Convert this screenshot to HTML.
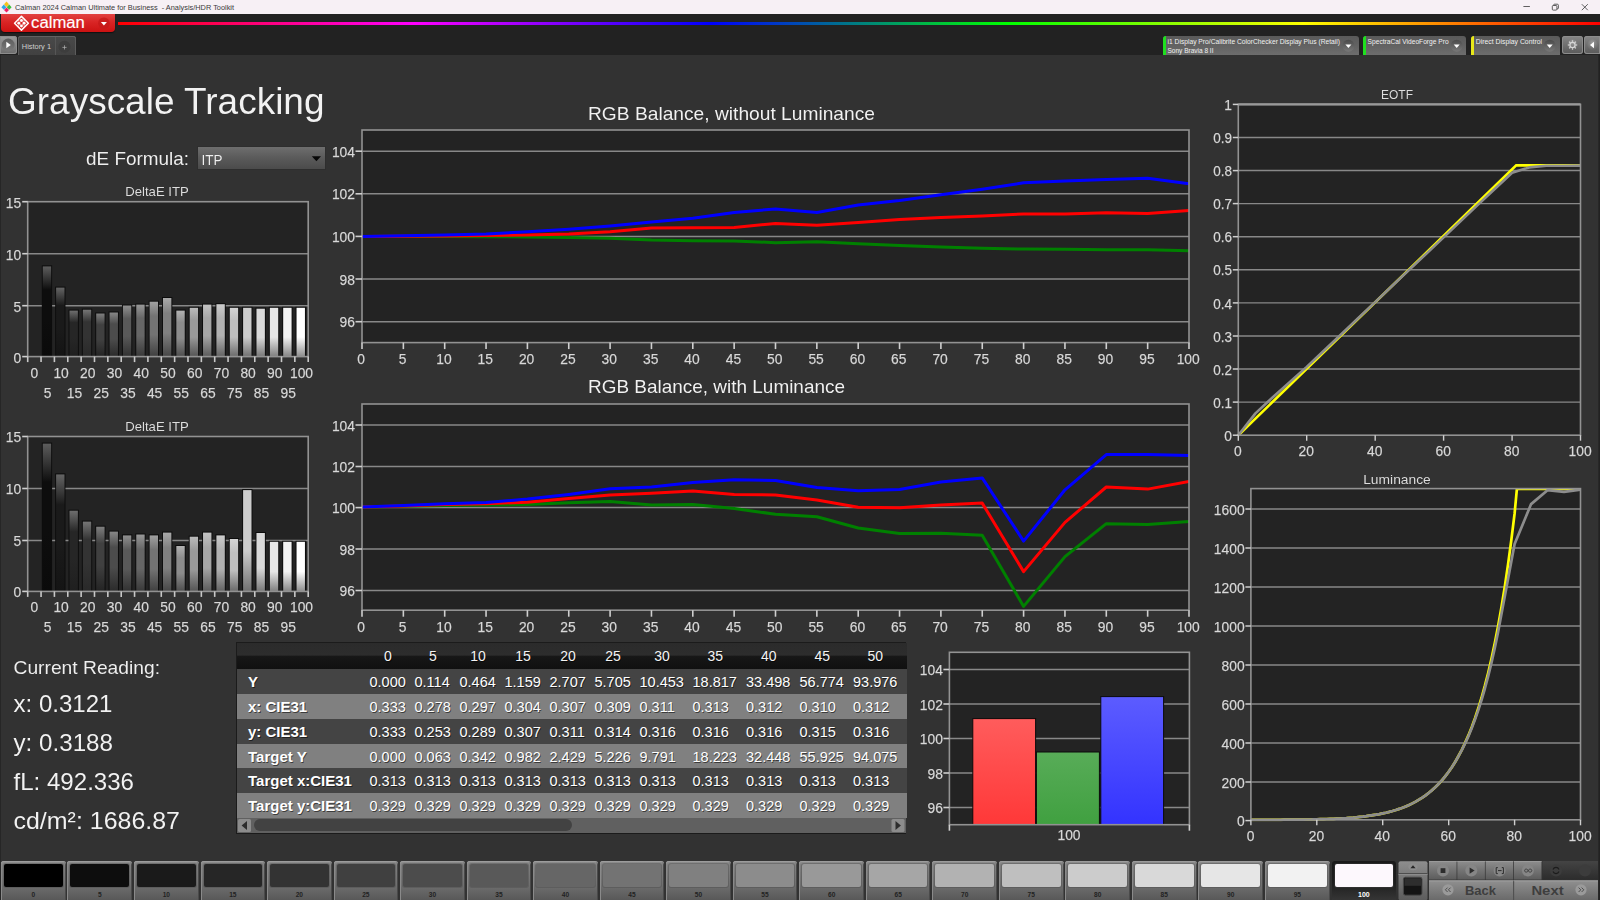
<!DOCTYPE html>
<html lang="en"><head><meta charset="utf-8"><title>Calman 2024 Calman Ultimate for Business - Analysis/HDR Toolkit</title>
<style>
html,body{margin:0;padding:0;}
body{width:1600px;height:900px;overflow:hidden;background:#323232;position:relative;font-family:"Liberation Sans",Arial,sans-serif;color:#eee;}
svg{position:absolute;left:0;top:0;overflow:visible}
svg text{font-family:"Liberation Sans",Arial,sans-serif;}
g.sh text{filter:drop-shadow(0.8px 0.8px 0.5px rgba(0,0,0,.6));}
.abs{position:absolute}
#titlebar{left:0;top:0;width:1600px;height:14px;background:#f7f0f5;}
#band{left:0;top:14px;width:1600px;height:41px;background:#222;}
#spectrum{left:118px;top:22px;width:1482px;height:3px;background:linear-gradient(to right,#f00 0%,#f0f 20%,#00f 40%,#0f0 60%,#ff0 80%,#f00 100%);}
#logo{left:1px;top:14px;width:113.5px;height:18.2px;border-radius:0 0 4px 4px;background:linear-gradient(#e24141,#d92525 45%,#cc1212);box-shadow:0 1px 1px #111;}
#rstrip{left:1598px;top:55px;width:2px;height:845px;background:linear-gradient(to right,#2a2a2a,#1f1f1f);}
#lstrip{left:0;top:55px;width:1px;height:845px;background:#262626;}
.dd{position:absolute;top:36px;height:19px;border-radius:3px 3px 0 0;background:linear-gradient(#5a5a5a,#626262 50%,#6d6d6d);overflow:hidden}
.dd i{position:absolute;left:0;top:0;width:3.5px;height:19px;}
.btn{position:absolute;border-radius:3px;background:linear-gradient(#868686,#5a5a5a);box-shadow:inset 0 0 0 1px #8c8c8c;}
#tab{left:18px;top:36px;width:58px;height:19px;border-radius:3px 3px 0 0;background:linear-gradient(#494949,#414141);box-shadow:inset 0 1px 0 #626262, inset 1px 0 0 #5c5c5c, inset -1px 0 0 #5c5c5c;}
#combo{left:196.5px;top:145.5px;width:129.7px;height:24.7px;background:linear-gradient(#707070,#5a5a5a 50%,#4a4a4a);box-shadow:inset 0 0 0 1px #2e2e2e;}
table{position:absolute;left:236.5px;top:642.5px;border-collapse:collapse;table-layout:fixed;width:669.5px;font-size:14.5px;color:#fff;text-shadow:0.8px 0.8px 0.6px rgba(0,0,0,.55);}
td,th{padding:0 0 0 4px;height:24px;text-align:left;white-space:nowrap;overflow:hidden;font-weight:400;line-height:22.9px;vertical-align:bottom;}
thead th{height:26px;line-height:26px;vertical-align:middle;text-align:center;padding:0;font-size:14px;color:#f4f4f4;}
thead tr{background:linear-gradient(#2b2b2b,#2d2d2d 46%,#171717 52%,#101010);}
tbody tr:nth-child(odd){background:#444;}
tbody tr:nth-child(even){background:#808080;}
tbody th{font-weight:700;padding-left:11.5px;font-size:15px;}
#tborder{left:235.5px;top:641.5px;width:670.5px;height:192px;background:#1b1b1b;}
#hscroll{left:236.5px;top:818px;width:669.5px;height:14.5px;background:#606060;}
#thumb{left:254px;top:819.4px;width:318px;height:12px;border-radius:6px;background:#424242;}
.sw{position:absolute;top:861.2px;width:64.7px;height:39px;border-radius:3px 3px 0 0;background:linear-gradient(#909090,#7e7e7e 12%,#707070 60%,#585858);box-shadow:inset 0 1px 0 #9c9c9c, inset 1px 0 0 #8a8a8a, inset -1px 0 0 #4a4a4a;}
.sw b{position:absolute;left:3px;top:3.3px;width:58.7px;height:22.6px;border-radius:2px;box-shadow:0 0 0 1px rgba(70,70,70,.35);}
.sw span{position:absolute;left:0;width:64.7px;top:30.1px;text-align:center;font-size:6.6px;color:#222;line-height:8px;font-weight:700;}
.sw.sel{background:linear-gradient(#1a1a1a,#1e1e1e 55%,#353535);box-shadow:none}
.sw.sel span{color:#fff;font-weight:700;font-size:7px}
</style></head><body>

<div id="titlebar" class="abs"></div><div id="band" class="abs"></div><div id="spectrum" class="abs"></div><div id="logo" class="abs"></div>
<div id="lstrip" class="abs"></div><div id="rstrip" class="abs"></div>
<div class="btn" style="left:0;top:36px;width:17px;height:18px;border-radius:0 3px 3px 0;background:linear-gradient(#9a9a9a,#6c6c6c)"></div><div id="tab" class="abs"></div>
<div class="abs" style="left:54.6px;top:37px;width:1.8px;height:18px;background:#565656"></div>
<div class="dd" style="left:1162.5px;width:196.0px"><i style="background:#1fe01f"></i></div>
<div class="dd" style="left:1362.5px;width:103.70000000000005px"><i style="background:#1fe01f"></i></div>
<div class="dd" style="left:1470.6px;width:89.40000000000009px"><i style="background:#e8e81a"></i></div>
<div class="btn" style="left:1562px;top:36px;width:21px;height:18px"></div>
<div class="btn" style="left:1584px;top:36px;width:16px;height:18px;border-radius:3px 0 0 3px"></div>
<div id="combo" class="abs"></div>
<div id="tborder" class="abs"></div>
<table><colgroup><col style="width:129px"><col style="width:45px"><col style="width:45px"><col style="width:45px"><col style="width:45px"><col style="width:45px"><col style="width:45px"><col style="width:53px"><col style="width:53.5px"><col style="width:53.5px"><col style="width:53.5px"><col style="width:52.5px"><col style="width:5px"></colgroup>
<thead><tr><th></th><th>0</th><th>5</th><th>10</th><th>15</th><th>20</th><th>25</th><th>30</th><th>35</th><th>40</th><th>45</th><th>50</th><th></th></tr></thead><tbody>
<tr><th style="height:25.5px">Y</th><td>0.000</td><td>0.114</td><td>0.464</td><td>1.159</td><td>2.707</td><td>5.705</td><td>10.453</td><td>18.817</td><td>33.498</td><td>56.774</td><td>93.976</td><td></td></tr>
<tr><th style="height:25px">x: CIE31</th><td>0.333</td><td>0.278</td><td>0.297</td><td>0.304</td><td>0.307</td><td>0.309</td><td>0.311</td><td>0.313</td><td>0.312</td><td>0.310</td><td>0.312</td><td></td></tr>
<tr><th style="height:24.6px">y: CIE31</th><td>0.333</td><td>0.253</td><td>0.289</td><td>0.307</td><td>0.311</td><td>0.314</td><td>0.316</td><td>0.316</td><td>0.316</td><td>0.315</td><td>0.316</td><td></td></tr>
<tr><th style="height:24.9px">Target Y</th><td>0.000</td><td>0.063</td><td>0.342</td><td>0.982</td><td>2.429</td><td>5.226</td><td>9.791</td><td>18.223</td><td>32.448</td><td>55.925</td><td>94.075</td><td></td></tr>
<tr><th style="height:24.6px">Target x:CIE31</th><td>0.313</td><td>0.313</td><td>0.313</td><td>0.313</td><td>0.313</td><td>0.313</td><td>0.313</td><td>0.313</td><td>0.313</td><td>0.313</td><td>0.313</td><td></td></tr>
<tr><th style="height:24.9px">Target y:CIE31</th><td>0.329</td><td>0.329</td><td>0.329</td><td>0.329</td><td>0.329</td><td>0.329</td><td>0.329</td><td>0.329</td><td>0.329</td><td>0.329</td><td>0.329</td><td></td></tr>
</tbody></table>
<div id="hscroll" class="abs"></div><div id="thumb" class="abs"></div>
<div class="sw" style="left:0.9px"><b style="background:rgb(0,0,0)"></b><span>0</span></div>
<div class="sw" style="left:67.4px"><b style="background:rgb(13,13,13)"></b><span>5</span></div>
<div class="sw" style="left:134.0px"><b style="background:rgb(26,26,26)"></b><span>10</span></div>
<div class="sw" style="left:200.5px"><b style="background:rgb(38,38,38)"></b><span>15</span></div>
<div class="sw" style="left:267.0px"><b style="background:rgb(51,51,51)"></b><span>20</span></div>
<div class="sw" style="left:333.5px"><b style="background:rgb(64,64,64)"></b><span>25</span></div>
<div class="sw" style="left:400.1px"><b style="background:rgb(76,76,76)"></b><span>30</span></div>
<div class="sw" style="left:466.6px"><b style="background:rgb(89,89,89)"></b><span>35</span></div>
<div class="sw" style="left:533.1px"><b style="background:rgb(102,102,102)"></b><span>40</span></div>
<div class="sw" style="left:599.7px"><b style="background:rgb(115,115,115)"></b><span>45</span></div>
<div class="sw" style="left:666.2px"><b style="background:rgb(128,128,128)"></b><span>50</span></div>
<div class="sw" style="left:732.7px"><b style="background:rgb(140,140,140)"></b><span>55</span></div>
<div class="sw" style="left:799.3px"><b style="background:rgb(153,153,153)"></b><span>60</span></div>
<div class="sw" style="left:865.8px"><b style="background:rgb(166,166,166)"></b><span>65</span></div>
<div class="sw" style="left:932.3px"><b style="background:rgb(178,178,178)"></b><span>70</span></div>
<div class="sw" style="left:998.9px"><b style="background:rgb(191,191,191)"></b><span>75</span></div>
<div class="sw" style="left:1065.4px"><b style="background:rgb(204,204,204)"></b><span>80</span></div>
<div class="sw" style="left:1131.9px"><b style="background:rgb(217,217,217)"></b><span>85</span></div>
<div class="sw" style="left:1198.4px"><b style="background:rgb(230,230,230)"></b><span>90</span></div>
<div class="sw" style="left:1265.0px"><b style="background:rgb(242,242,242)"></b><span>95</span></div>
<div class="sw sel" style="left:1331.5px"><b style="background:#fdf8fd"></b><span>100</span></div>
<svg width="1600" height="900" viewBox="0 0 1600 900">
<defs>
<linearGradient id="gR" x1="0" y1="0" x2="0" y2="1"><stop offset="0" stop-color="#ff5c5c"/><stop offset="1" stop-color="#ff3838"/></linearGradient>
<linearGradient id="gG" x1="0" y1="0" x2="0" y2="1"><stop offset="0" stop-color="#58ac58"/><stop offset="1" stop-color="#40a040"/></linearGradient>
<linearGradient id="gB" x1="0" y1="0" x2="0" y2="1"><stop offset="0" stop-color="#5c5cff"/><stop offset="1" stop-color="#3333ff"/></linearGradient>
<linearGradient id="gDD" x1="0" y1="0" x2="0" y2="1"><stop offset="0" stop-color="#4a4a4a"/><stop offset="1" stop-color="#787878"/></linearGradient>
<linearGradient id="gP" x1="0" y1="0" x2="0" y2="1"><stop offset="0" stop-color="#5c5c5c"/><stop offset="1" stop-color="#7a7a7a"/></linearGradient>
<radialGradient id="gC" cx="0.5" cy="0.3" r="0.8"><stop offset="0" stop-color="#9a9a9a"/><stop offset="1" stop-color="#555"/></radialGradient>

<linearGradient id="b5" x1="0" y1="0" x2="0" y2="1"><stop offset="0" stop-color="#5d5d5d"/><stop offset="0.26" stop-color="#0d0d0d"/><stop offset="0.6" stop-color="#0d0d0d"/><stop offset="1" stop-color="#0a0a0a"/></linearGradient>
<linearGradient id="b10" x1="0" y1="0" x2="0" y2="1"><stop offset="0" stop-color="#656565"/><stop offset="0.26" stop-color="#1a1a1a"/><stop offset="0.6" stop-color="#1a1a1a"/><stop offset="1" stop-color="#141414"/></linearGradient>
<linearGradient id="b15" x1="0" y1="0" x2="0" y2="1"><stop offset="0" stop-color="#6e6e6e"/><stop offset="0.26" stop-color="#262626"/><stop offset="0.6" stop-color="#262626"/><stop offset="1" stop-color="#1f1f1f"/></linearGradient>
<linearGradient id="b20" x1="0" y1="0" x2="0" y2="1"><stop offset="0" stop-color="#767676"/><stop offset="0.26" stop-color="#333333"/><stop offset="0.6" stop-color="#333333"/><stop offset="1" stop-color="#292929"/></linearGradient>
<linearGradient id="b25" x1="0" y1="0" x2="0" y2="1"><stop offset="0" stop-color="#7f7f7f"/><stop offset="0.26" stop-color="#404040"/><stop offset="0.6" stop-color="#404040"/><stop offset="1" stop-color="#232323"/></linearGradient>
<linearGradient id="b30" x1="0" y1="0" x2="0" y2="1"><stop offset="0" stop-color="#878787"/><stop offset="0.26" stop-color="#4c4c4c"/><stop offset="0.6" stop-color="#4c4c4c"/><stop offset="1" stop-color="#2a2a2a"/></linearGradient>
<linearGradient id="b35" x1="0" y1="0" x2="0" y2="1"><stop offset="0" stop-color="#909090"/><stop offset="0.26" stop-color="#595959"/><stop offset="0.6" stop-color="#595959"/><stop offset="1" stop-color="#313131"/></linearGradient>
<linearGradient id="b40" x1="0" y1="0" x2="0" y2="1"><stop offset="0" stop-color="#989898"/><stop offset="0.26" stop-color="#666666"/><stop offset="0.6" stop-color="#666666"/><stop offset="1" stop-color="#383838"/></linearGradient>
<linearGradient id="b45" x1="0" y1="0" x2="0" y2="1"><stop offset="0" stop-color="#a1a1a1"/><stop offset="0.26" stop-color="#737373"/><stop offset="0.6" stop-color="#737373"/><stop offset="1" stop-color="#3f3f3f"/></linearGradient>
<linearGradient id="b50" x1="0" y1="0" x2="0" y2="1"><stop offset="0" stop-color="#aaaaaa"/><stop offset="0.26" stop-color="#808080"/><stop offset="0.6" stop-color="#808080"/><stop offset="1" stop-color="#464646"/></linearGradient>
<linearGradient id="b55" x1="0" y1="0" x2="0" y2="1"><stop offset="0" stop-color="#b2b2b2"/><stop offset="0.26" stop-color="#8c8c8c"/><stop offset="0.6" stop-color="#8c8c8c"/><stop offset="1" stop-color="#4d4d4d"/></linearGradient>
<linearGradient id="b60" x1="0" y1="0" x2="0" y2="1"><stop offset="0" stop-color="#bbbbbb"/><stop offset="0.26" stop-color="#999999"/><stop offset="0.6" stop-color="#999999"/><stop offset="1" stop-color="#545454"/></linearGradient>
<linearGradient id="b65" x1="0" y1="0" x2="0" y2="1"><stop offset="0" stop-color="#c3c3c3"/><stop offset="0.26" stop-color="#a6a6a6"/><stop offset="0.6" stop-color="#a6a6a6"/><stop offset="1" stop-color="#5b5b5b"/></linearGradient>
<linearGradient id="b70" x1="0" y1="0" x2="0" y2="1"><stop offset="0" stop-color="#cccccc"/><stop offset="0.26" stop-color="#b2b2b2"/><stop offset="0.6" stop-color="#b2b2b2"/><stop offset="1" stop-color="#626262"/></linearGradient>
<linearGradient id="b75" x1="0" y1="0" x2="0" y2="1"><stop offset="0" stop-color="#d4d4d4"/><stop offset="0.26" stop-color="#bfbfbf"/><stop offset="0.6" stop-color="#bfbfbf"/><stop offset="1" stop-color="#696969"/></linearGradient>
<linearGradient id="b80" x1="0" y1="0" x2="0" y2="1"><stop offset="0" stop-color="#cccccc"/><stop offset="0.26" stop-color="#cccccc"/><stop offset="0.6" stop-color="#cccccc"/><stop offset="1" stop-color="#707070"/></linearGradient>
<linearGradient id="b85" x1="0" y1="0" x2="0" y2="1"><stop offset="0" stop-color="#d9d9d9"/><stop offset="0.26" stop-color="#d9d9d9"/><stop offset="0.6" stop-color="#d9d9d9"/><stop offset="1" stop-color="#777777"/></linearGradient>
<linearGradient id="b90" x1="0" y1="0" x2="0" y2="1"><stop offset="0" stop-color="#e6e6e6"/><stop offset="0.26" stop-color="#e6e6e6"/><stop offset="0.6" stop-color="#e6e6e6"/><stop offset="1" stop-color="#7e7e7e"/></linearGradient>
<linearGradient id="b95" x1="0" y1="0" x2="0" y2="1"><stop offset="0" stop-color="#f2f2f2"/><stop offset="0.26" stop-color="#f2f2f2"/><stop offset="0.6" stop-color="#f2f2f2"/><stop offset="1" stop-color="#858585"/></linearGradient>
<linearGradient id="b100" x1="0" y1="0" x2="0" y2="1"><stop offset="0" stop-color="#ffffff"/><stop offset="0.26" stop-color="#ffffff"/><stop offset="0.6" stop-color="#ffffff"/><stop offset="1" stop-color="#8c8c8c"/></linearGradient>
</defs>
<g id="winicon"><path d="M6.5 1.6 L9 4.3 L6.5 7 L4 4.3Z" fill="#f6c21c"/><path d="M3.8 4.6 L6.3 7.2 L3.8 9.8 L1.4 7.2Z" fill="#2aa7e8"/><path d="M9.2 4.6 L11.6 7.2 L9.2 9.8 L6.7 7.2Z" fill="#3fbf3f"/><path d="M6.5 7.4 L9 10 L6.5 12.6 L4 10Z" fill="#ee2266"/></g>
<text x="15" y="10.2" font-size="7.8" text-anchor="start" fill="#3a3a3a" textLength="219" lengthAdjust="spacingAndGlyphs" style="white-space:pre">Calman 2024 Calman Ultimate for Business  - Analysis/HDR Toolkit</text>
<g stroke="#3a3a3a" stroke-width="0.8" fill="none"><line x1="1523.4" y1="6.5" x2="1529.9" y2="6.5"/><rect x="1552.3" y="5.5" width="4.6" height="4.6" rx="0.9"/><path d="M1553.7 5.5 V4.9 Q1553.7 4.2 1554.5 4.2 H1557.3 Q1558.4 4.2 1558.4 5.3 V8 Q1558.4 8.8 1557.6 8.8 H1557"/><path d="M1581.8 4.2 L1587.8 10.2 M1587.8 4.2 L1581.8 10.2"/></g>
<g id="calman">
<path d="M21.45 16.35 L28.35 23.25 L21.45 30.15 L14.549999999999999 23.25Z" fill="none" stroke="#fff" stroke-width="1.5" stroke-linejoin="round"/>
<circle cx="21.45" cy="20.55" r="1.45" fill="#fff"/>
<circle cx="18.75" cy="23.25" r="1.45" fill="#fff"/>
<circle cx="24.15" cy="23.25" r="1.45" fill="#fff"/>
<circle cx="21.45" cy="25.95" r="1.45" fill="#fff"/>
<circle cx="20.15" cy="21.95" r="0.8" fill="#fff" opacity="0.45"/>
<circle cx="22.75" cy="21.95" r="0.8" fill="#fff" opacity="0.45"/>
<circle cx="20.15" cy="24.55" r="0.8" fill="#fff" opacity="0.45"/>
<circle cx="22.75" cy="24.55" r="0.8" fill="#fff" opacity="0.45"/>
<circle cx="18.849999999999998" cy="20.65" r="0.8" fill="#fff" opacity="0.45"/>
<circle cx="24.05" cy="20.65" r="0.8" fill="#fff" opacity="0.45"/>
<circle cx="18.849999999999998" cy="25.85" r="0.8" fill="#fff" opacity="0.45"/>
<circle cx="24.05" cy="25.85" r="0.8" fill="#fff" opacity="0.45"/>
<text x="31.1" y="27.6" font-size="16.3" text-anchor="start" fill="#fff" textLength="53.7" lengthAdjust="spacingAndGlyphs" stroke="#fff" stroke-width="0.15">calman</text>
<circle cx="103.9" cy="23.2" r="5.8" fill="#c41a1a" opacity="0.75"/><path d="M100.9 22 H106.9 L103.9 25.4Z" fill="#fff"/>
</g>
<circle cx="8.2" cy="45" r="6.4" fill="url(#gP)"/><path d="M6.3 41.7 L10.8 45 L6.3 48.3Z" fill="#fff"/>
<text x="21.8" y="49.2" font-size="7.8" text-anchor="start" fill="#d0d0d0" textLength="29.2" lengthAdjust="spacingAndGlyphs" >History 1</text>
<circle cx="64.5" cy="46.8" r="6" fill="#3d3d3d"/><path d="M62.4 47.4 H66.6 M64.5 45.3 V49.5" stroke="#b4b4b4" stroke-width="0.7"/>
<text x="1167.5" y="43.9" font-size="7.2" text-anchor="start" fill="#f2f2f2" textLength="172.5" lengthAdjust="spacingAndGlyphs" >i1 Display Pro/Calibrite ColorChecker Display Plus (Retail)</text>
<text x="1167.5" y="53.2" font-size="7.2" text-anchor="start" fill="#f2f2f2" textLength="46" lengthAdjust="spacingAndGlyphs" >Sony Bravia 8 II</text>
<text x="1367.6" y="43.9" font-size="7.2" text-anchor="start" fill="#f2f2f2" textLength="81" lengthAdjust="spacingAndGlyphs" >SpectraCal VideoForge Pro</text>
<text x="1475.8" y="43.9" font-size="7.2" text-anchor="start" fill="#f2f2f2" textLength="66.2" lengthAdjust="spacingAndGlyphs" >Direct Display Control</text>
<circle cx="1348.4" cy="45.7" r="6" fill="url(#gDD)"/><path d="M1345.4 44.6 H1351.4 L1348.4 48Z" fill="#fff"/>
<circle cx="1456.7" cy="45.7" r="6" fill="url(#gDD)"/><path d="M1453.7 44.6 H1459.7 L1456.7 48Z" fill="#fff"/>
<circle cx="1549.7" cy="45.7" r="6" fill="url(#gDD)"/><path d="M1546.7 44.6 H1552.7 L1549.7 48Z" fill="#fff"/>
<circle cx="1572.5" cy="45" r="6" fill="url(#gC)"/>
<circle cx="1572.5" cy="45" r="2.6" fill="none" stroke="#d6d6d6" stroke-width="1.3"/>
<line x1="1575.70" y1="45.00" x2="1577.20" y2="45.00" stroke="#d6d6d6" stroke-width="1.2"/>
<line x1="1574.76" y1="47.26" x2="1575.82" y2="48.32" stroke="#d6d6d6" stroke-width="1.2"/>
<line x1="1572.50" y1="48.20" x2="1572.50" y2="49.70" stroke="#d6d6d6" stroke-width="1.2"/>
<line x1="1570.24" y1="47.26" x2="1569.18" y2="48.32" stroke="#d6d6d6" stroke-width="1.2"/>
<line x1="1569.30" y1="45.00" x2="1567.80" y2="45.00" stroke="#d6d6d6" stroke-width="1.2"/>
<line x1="1570.24" y1="42.74" x2="1569.18" y2="41.68" stroke="#d6d6d6" stroke-width="1.2"/>
<line x1="1572.50" y1="41.80" x2="1572.50" y2="40.30" stroke="#d6d6d6" stroke-width="1.2"/>
<line x1="1574.76" y1="42.74" x2="1575.82" y2="41.68" stroke="#d6d6d6" stroke-width="1.2"/>
<circle cx="1592.5" cy="45" r="6" fill="url(#gC)"/><path d="M1594 41.8 L1590 45 L1594 48.2Z" fill="#fff"/>
<g id="headings" class="sh">
<text x="8" y="113.7" font-size="37" text-anchor="start" fill="#f2f2f2" textLength="316.5" lengthAdjust="spacingAndGlyphs" >Grayscale Tracking</text>
<text x="86" y="165" font-size="19" text-anchor="start" fill="#efefef" textLength="103" lengthAdjust="spacingAndGlyphs" >dE Formula:</text>
<text x="201.5" y="164.5" font-size="14.5" text-anchor="start" fill="#f0f0f0" textLength="21" lengthAdjust="spacingAndGlyphs" >ITP</text>
</g>
<path d="M311.8 156.3 H321 L316.4 161.2Z" fill="#080808"/>
<g id="deltaE1" class="sh"><rect x="27.7" y="201.7" width="280.5" height="154.90000000000003" fill="#232323"/><line x1="27.7" y1="253.7" x2="308.2" y2="253.7" stroke="#888888" stroke-width="1.5"/><line x1="27.7" y1="305.7" x2="308.2" y2="305.7" stroke="#888888" stroke-width="1.5"/><rect x="41.81" y="265.4" width="10.3" height="91.20" fill="#0c0c0c"/><rect x="42.76" y="266.4" width="8.4" height="90.20" fill="url(#b5)"/><rect x="55.16" y="286.6" width="10.3" height="70.00" fill="#0c0c0c"/><rect x="56.11" y="287.6" width="8.4" height="69.00" fill="url(#b10)"/><rect x="68.52" y="309.6" width="10.3" height="47.00" fill="#0c0c0c"/><rect x="69.47" y="310.6" width="8.4" height="46.00" fill="url(#b15)"/><rect x="81.88" y="308.7" width="10.3" height="47.90" fill="#0c0c0c"/><rect x="82.83" y="309.7" width="8.4" height="46.90" fill="url(#b20)"/><rect x="95.24" y="312.5" width="10.3" height="44.10" fill="#0c0c0c"/><rect x="96.19" y="313.5" width="8.4" height="43.10" fill="url(#b25)"/><rect x="108.59" y="311.5" width="10.3" height="45.10" fill="#0c0c0c"/><rect x="109.54" y="312.5" width="8.4" height="44.10" fill="url(#b30)"/><rect x="121.95" y="304.5" width="10.3" height="52.10" fill="#0c0c0c"/><rect x="122.90" y="305.5" width="8.4" height="51.10" fill="url(#b35)"/><rect x="135.31" y="303.6" width="10.3" height="53.00" fill="#0c0c0c"/><rect x="136.26" y="304.6" width="8.4" height="52.00" fill="url(#b40)"/><rect x="148.66" y="300.7" width="10.3" height="55.90" fill="#0c0c0c"/><rect x="149.61" y="301.7" width="8.4" height="54.90" fill="url(#b45)"/><rect x="162.02" y="297.0" width="10.3" height="59.60" fill="#0c0c0c"/><rect x="162.97" y="298" width="8.4" height="58.60" fill="url(#b50)"/><rect x="175.38" y="309.6" width="10.3" height="47.00" fill="#0c0c0c"/><rect x="176.33" y="310.6" width="8.4" height="46.00" fill="url(#b55)"/><rect x="188.74" y="306.8" width="10.3" height="49.80" fill="#0c0c0c"/><rect x="189.69" y="307.8" width="8.4" height="48.80" fill="url(#b60)"/><rect x="202.09" y="303.6" width="10.3" height="53.00" fill="#0c0c0c"/><rect x="203.04" y="304.6" width="8.4" height="52.00" fill="url(#b65)"/><rect x="215.45" y="303.2" width="10.3" height="53.40" fill="#0c0c0c"/><rect x="216.40" y="304.2" width="8.4" height="52.40" fill="url(#b70)"/><rect x="228.81" y="306.8" width="10.3" height="49.80" fill="#0c0c0c"/><rect x="229.76" y="307.8" width="8.4" height="48.80" fill="url(#b75)"/><rect x="242.16" y="306.8" width="10.3" height="49.80" fill="#0c0c0c"/><rect x="243.11" y="307.8" width="8.4" height="48.80" fill="url(#b80)"/><rect x="255.52" y="307.7" width="10.3" height="48.90" fill="#0c0c0c"/><rect x="256.47" y="308.7" width="8.4" height="47.90" fill="url(#b85)"/><rect x="268.88" y="306.8" width="10.3" height="49.80" fill="#0c0c0c"/><rect x="269.83" y="307.8" width="8.4" height="48.80" fill="url(#b90)"/><rect x="282.24" y="306.8" width="10.3" height="49.80" fill="#0c0c0c"/><rect x="283.19" y="307.8" width="8.4" height="48.80" fill="url(#b95)"/><rect x="295.59" y="306.8" width="10.3" height="49.80" fill="#0c0c0c"/><rect x="296.54" y="307.8" width="8.4" height="48.80" fill="url(#b100)"/><rect x="27.7" y="201.7" width="280.5" height="154.90000000000003" fill="none" stroke="#929292" stroke-width="1.6"/><line x1="22.2" y1="201.7" x2="27.7" y2="201.7" stroke="#cfcfcf" stroke-width="1.6"/><text x="21.2" y="207.6" font-size="14.6" text-anchor="end" fill="#d9d9d9" textLength="15.40" lengthAdjust="spacingAndGlyphs" stroke="#d9d9d9" stroke-width="0.25">15</text><line x1="22.2" y1="253.7" x2="27.7" y2="253.7" stroke="#cfcfcf" stroke-width="1.6"/><text x="21.2" y="259.59999999999997" font-size="14.6" text-anchor="end" fill="#d9d9d9" textLength="15.40" lengthAdjust="spacingAndGlyphs" stroke="#d9d9d9" stroke-width="0.25">10</text><line x1="22.2" y1="305.7" x2="27.7" y2="305.7" stroke="#cfcfcf" stroke-width="1.6"/><text x="21.2" y="311.59999999999997" font-size="14.6" text-anchor="end" fill="#d9d9d9" textLength="7.70" lengthAdjust="spacingAndGlyphs" stroke="#d9d9d9" stroke-width="0.25">5</text><line x1="22.2" y1="356.6" x2="27.7" y2="356.6" stroke="#cfcfcf" stroke-width="1.6"/><text x="21.2" y="362.5" font-size="14.6" text-anchor="end" fill="#d9d9d9" textLength="7.70" lengthAdjust="spacingAndGlyphs" stroke="#d9d9d9" stroke-width="0.25">0</text><line x1="27.70" y1="356.6" x2="27.70" y2="362.1" stroke="#c8c8c8" stroke-width="1.6"/><line x1="41.06" y1="356.6" x2="41.06" y2="362.1" stroke="#c8c8c8" stroke-width="1.6"/><line x1="54.41" y1="356.6" x2="54.41" y2="362.1" stroke="#c8c8c8" stroke-width="1.6"/><line x1="67.77" y1="356.6" x2="67.77" y2="362.1" stroke="#c8c8c8" stroke-width="1.6"/><line x1="81.13" y1="356.6" x2="81.13" y2="362.1" stroke="#c8c8c8" stroke-width="1.6"/><line x1="94.49" y1="356.6" x2="94.49" y2="362.1" stroke="#c8c8c8" stroke-width="1.6"/><line x1="107.84" y1="356.6" x2="107.84" y2="362.1" stroke="#c8c8c8" stroke-width="1.6"/><line x1="121.20" y1="356.6" x2="121.20" y2="362.1" stroke="#c8c8c8" stroke-width="1.6"/><line x1="134.56" y1="356.6" x2="134.56" y2="362.1" stroke="#c8c8c8" stroke-width="1.6"/><line x1="147.91" y1="356.6" x2="147.91" y2="362.1" stroke="#c8c8c8" stroke-width="1.6"/><line x1="161.27" y1="356.6" x2="161.27" y2="362.1" stroke="#c8c8c8" stroke-width="1.6"/><line x1="174.63" y1="356.6" x2="174.63" y2="362.1" stroke="#c8c8c8" stroke-width="1.6"/><line x1="187.99" y1="356.6" x2="187.99" y2="362.1" stroke="#c8c8c8" stroke-width="1.6"/><line x1="201.34" y1="356.6" x2="201.34" y2="362.1" stroke="#c8c8c8" stroke-width="1.6"/><line x1="214.70" y1="356.6" x2="214.70" y2="362.1" stroke="#c8c8c8" stroke-width="1.6"/><line x1="228.06" y1="356.6" x2="228.06" y2="362.1" stroke="#c8c8c8" stroke-width="1.6"/><line x1="241.41" y1="356.6" x2="241.41" y2="362.1" stroke="#c8c8c8" stroke-width="1.6"/><line x1="254.77" y1="356.6" x2="254.77" y2="362.1" stroke="#c8c8c8" stroke-width="1.6"/><line x1="268.13" y1="356.6" x2="268.13" y2="362.1" stroke="#c8c8c8" stroke-width="1.6"/><line x1="281.49" y1="356.6" x2="281.49" y2="362.1" stroke="#c8c8c8" stroke-width="1.6"/><line x1="294.84" y1="356.6" x2="294.84" y2="362.1" stroke="#c8c8c8" stroke-width="1.6"/><line x1="308.20" y1="356.6" x2="308.20" y2="362.1" stroke="#c8c8c8" stroke-width="1.6"/><text x="34.4" y="377.8" font-size="14.6" text-anchor="middle" fill="#d9d9d9" textLength="7.70" lengthAdjust="spacingAndGlyphs" stroke="#d9d9d9" stroke-width="0.25">0</text><text x="47.7" y="397.5" font-size="14.6" text-anchor="middle" fill="#d9d9d9" textLength="7.70" lengthAdjust="spacingAndGlyphs" stroke="#d9d9d9" stroke-width="0.25">5</text><text x="61.1" y="377.8" font-size="14.6" text-anchor="middle" fill="#d9d9d9" textLength="15.40" lengthAdjust="spacingAndGlyphs" stroke="#d9d9d9" stroke-width="0.25">10</text><text x="74.5" y="397.5" font-size="14.6" text-anchor="middle" fill="#d9d9d9" textLength="15.40" lengthAdjust="spacingAndGlyphs" stroke="#d9d9d9" stroke-width="0.25">15</text><text x="87.8" y="377.8" font-size="14.6" text-anchor="middle" fill="#d9d9d9" textLength="15.40" lengthAdjust="spacingAndGlyphs" stroke="#d9d9d9" stroke-width="0.25">20</text><text x="101.2" y="397.5" font-size="14.6" text-anchor="middle" fill="#d9d9d9" textLength="15.40" lengthAdjust="spacingAndGlyphs" stroke="#d9d9d9" stroke-width="0.25">25</text><text x="114.5" y="377.8" font-size="14.6" text-anchor="middle" fill="#d9d9d9" textLength="15.40" lengthAdjust="spacingAndGlyphs" stroke="#d9d9d9" stroke-width="0.25">30</text><text x="127.9" y="397.5" font-size="14.6" text-anchor="middle" fill="#d9d9d9" textLength="15.40" lengthAdjust="spacingAndGlyphs" stroke="#d9d9d9" stroke-width="0.25">35</text><text x="141.2" y="377.8" font-size="14.6" text-anchor="middle" fill="#d9d9d9" textLength="15.40" lengthAdjust="spacingAndGlyphs" stroke="#d9d9d9" stroke-width="0.25">40</text><text x="154.6" y="397.5" font-size="14.6" text-anchor="middle" fill="#d9d9d9" textLength="15.40" lengthAdjust="spacingAndGlyphs" stroke="#d9d9d9" stroke-width="0.25">45</text><text x="167.9" y="377.8" font-size="14.6" text-anchor="middle" fill="#d9d9d9" textLength="15.40" lengthAdjust="spacingAndGlyphs" stroke="#d9d9d9" stroke-width="0.25">50</text><text x="181.3" y="397.5" font-size="14.6" text-anchor="middle" fill="#d9d9d9" textLength="15.40" lengthAdjust="spacingAndGlyphs" stroke="#d9d9d9" stroke-width="0.25">55</text><text x="194.7" y="377.8" font-size="14.6" text-anchor="middle" fill="#d9d9d9" textLength="15.40" lengthAdjust="spacingAndGlyphs" stroke="#d9d9d9" stroke-width="0.25">60</text><text x="208.0" y="397.5" font-size="14.6" text-anchor="middle" fill="#d9d9d9" textLength="15.40" lengthAdjust="spacingAndGlyphs" stroke="#d9d9d9" stroke-width="0.25">65</text><text x="221.4" y="377.8" font-size="14.6" text-anchor="middle" fill="#d9d9d9" textLength="15.40" lengthAdjust="spacingAndGlyphs" stroke="#d9d9d9" stroke-width="0.25">70</text><text x="234.7" y="397.5" font-size="14.6" text-anchor="middle" fill="#d9d9d9" textLength="15.40" lengthAdjust="spacingAndGlyphs" stroke="#d9d9d9" stroke-width="0.25">75</text><text x="248.1" y="377.8" font-size="14.6" text-anchor="middle" fill="#d9d9d9" textLength="15.40" lengthAdjust="spacingAndGlyphs" stroke="#d9d9d9" stroke-width="0.25">80</text><text x="261.4" y="397.5" font-size="14.6" text-anchor="middle" fill="#d9d9d9" textLength="15.40" lengthAdjust="spacingAndGlyphs" stroke="#d9d9d9" stroke-width="0.25">85</text><text x="274.8" y="377.8" font-size="14.6" text-anchor="middle" fill="#d9d9d9" textLength="15.40" lengthAdjust="spacingAndGlyphs" stroke="#d9d9d9" stroke-width="0.25">90</text><text x="288.2" y="397.5" font-size="14.6" text-anchor="middle" fill="#d9d9d9" textLength="15.40" lengthAdjust="spacingAndGlyphs" stroke="#d9d9d9" stroke-width="0.25">95</text><text x="301.5" y="377.8" font-size="14.6" text-anchor="middle" fill="#d9d9d9" textLength="23.10" lengthAdjust="spacingAndGlyphs" stroke="#d9d9d9" stroke-width="0.25">100</text><text x="157" y="196.3" font-size="13.4" text-anchor="middle" fill="#dedede" textLength="63.5" lengthAdjust="spacingAndGlyphs" >DeltaE ITP</text></g>
<g id="deltaE2" class="sh"><rect x="27.7" y="436.5" width="280.5" height="154.89999999999998" fill="#232323"/><line x1="27.7" y1="488.5" x2="308.2" y2="488.5" stroke="#888888" stroke-width="1.5"/><line x1="27.7" y1="540.5" x2="308.2" y2="540.5" stroke="#888888" stroke-width="1.5"/><rect x="41.81" y="442.6" width="10.3" height="148.80" fill="#0c0c0c"/><rect x="42.76" y="443.6" width="8.4" height="147.80" fill="url(#b5)"/><rect x="55.16" y="473.4" width="10.3" height="118.00" fill="#0c0c0c"/><rect x="56.11" y="474.4" width="8.4" height="117.00" fill="url(#b10)"/><rect x="68.52" y="509.7" width="10.3" height="81.70" fill="#0c0c0c"/><rect x="69.47" y="510.7" width="8.4" height="80.70" fill="url(#b15)"/><rect x="81.88" y="520.6" width="10.3" height="70.80" fill="#0c0c0c"/><rect x="82.83" y="521.6" width="8.4" height="69.80" fill="url(#b20)"/><rect x="95.24" y="525.7" width="10.3" height="65.70" fill="#0c0c0c"/><rect x="96.19" y="526.7" width="8.4" height="64.70" fill="url(#b25)"/><rect x="108.59" y="530.6" width="10.3" height="60.80" fill="#0c0c0c"/><rect x="109.54" y="531.6" width="8.4" height="59.80" fill="url(#b30)"/><rect x="121.95" y="534.4" width="10.3" height="57.00" fill="#0c0c0c"/><rect x="122.90" y="535.4" width="8.4" height="56.00" fill="url(#b35)"/><rect x="135.31" y="533.5" width="10.3" height="57.90" fill="#0c0c0c"/><rect x="136.26" y="534.5" width="8.4" height="56.90" fill="url(#b40)"/><rect x="148.66" y="534.4" width="10.3" height="57.00" fill="#0c0c0c"/><rect x="149.61" y="535.4" width="8.4" height="56.00" fill="url(#b45)"/><rect x="162.02" y="531.6" width="10.3" height="59.80" fill="#0c0c0c"/><rect x="162.97" y="532.6" width="8.4" height="58.80" fill="url(#b50)"/><rect x="175.38" y="545.0" width="10.3" height="46.40" fill="#0c0c0c"/><rect x="176.33" y="546" width="8.4" height="45.40" fill="url(#b55)"/><rect x="188.74" y="535.7" width="10.3" height="55.70" fill="#0c0c0c"/><rect x="189.69" y="536.7" width="8.4" height="54.70" fill="url(#b60)"/><rect x="202.09" y="531.6" width="10.3" height="59.80" fill="#0c0c0c"/><rect x="203.04" y="532.6" width="8.4" height="58.80" fill="url(#b65)"/><rect x="215.45" y="534.4" width="10.3" height="57.00" fill="#0c0c0c"/><rect x="216.40" y="535.4" width="8.4" height="56.00" fill="url(#b70)"/><rect x="228.81" y="538.0" width="10.3" height="53.40" fill="#0c0c0c"/><rect x="229.76" y="539" width="8.4" height="52.40" fill="url(#b75)"/><rect x="242.16" y="489.1" width="10.3" height="102.30" fill="#0c0c0c"/><rect x="243.11" y="490.1" width="8.4" height="101.30" fill="url(#b80)"/><rect x="255.52" y="532.0" width="10.3" height="59.40" fill="#0c0c0c"/><rect x="256.47" y="533" width="8.4" height="58.40" fill="url(#b85)"/><rect x="268.88" y="540.8" width="10.3" height="50.60" fill="#0c0c0c"/><rect x="269.83" y="541.8" width="8.4" height="49.60" fill="url(#b90)"/><rect x="282.24" y="540.8" width="10.3" height="50.60" fill="#0c0c0c"/><rect x="283.19" y="541.8" width="8.4" height="49.60" fill="url(#b95)"/><rect x="295.59" y="540.8" width="10.3" height="50.60" fill="#0c0c0c"/><rect x="296.54" y="541.8" width="8.4" height="49.60" fill="url(#b100)"/><rect x="27.7" y="436.5" width="280.5" height="154.89999999999998" fill="none" stroke="#929292" stroke-width="1.6"/><line x1="22.2" y1="436.5" x2="27.7" y2="436.5" stroke="#cfcfcf" stroke-width="1.6"/><text x="21.2" y="442.4" font-size="14.6" text-anchor="end" fill="#d9d9d9" textLength="15.40" lengthAdjust="spacingAndGlyphs" stroke="#d9d9d9" stroke-width="0.25">15</text><line x1="22.2" y1="488.5" x2="27.7" y2="488.5" stroke="#cfcfcf" stroke-width="1.6"/><text x="21.2" y="494.4" font-size="14.6" text-anchor="end" fill="#d9d9d9" textLength="15.40" lengthAdjust="spacingAndGlyphs" stroke="#d9d9d9" stroke-width="0.25">10</text><line x1="22.2" y1="540.5" x2="27.7" y2="540.5" stroke="#cfcfcf" stroke-width="1.6"/><text x="21.2" y="546.4" font-size="14.6" text-anchor="end" fill="#d9d9d9" textLength="7.70" lengthAdjust="spacingAndGlyphs" stroke="#d9d9d9" stroke-width="0.25">5</text><line x1="22.2" y1="591.4" x2="27.7" y2="591.4" stroke="#cfcfcf" stroke-width="1.6"/><text x="21.2" y="597.3" font-size="14.6" text-anchor="end" fill="#d9d9d9" textLength="7.70" lengthAdjust="spacingAndGlyphs" stroke="#d9d9d9" stroke-width="0.25">0</text><line x1="27.70" y1="591.4" x2="27.70" y2="596.9" stroke="#c8c8c8" stroke-width="1.6"/><line x1="41.06" y1="591.4" x2="41.06" y2="596.9" stroke="#c8c8c8" stroke-width="1.6"/><line x1="54.41" y1="591.4" x2="54.41" y2="596.9" stroke="#c8c8c8" stroke-width="1.6"/><line x1="67.77" y1="591.4" x2="67.77" y2="596.9" stroke="#c8c8c8" stroke-width="1.6"/><line x1="81.13" y1="591.4" x2="81.13" y2="596.9" stroke="#c8c8c8" stroke-width="1.6"/><line x1="94.49" y1="591.4" x2="94.49" y2="596.9" stroke="#c8c8c8" stroke-width="1.6"/><line x1="107.84" y1="591.4" x2="107.84" y2="596.9" stroke="#c8c8c8" stroke-width="1.6"/><line x1="121.20" y1="591.4" x2="121.20" y2="596.9" stroke="#c8c8c8" stroke-width="1.6"/><line x1="134.56" y1="591.4" x2="134.56" y2="596.9" stroke="#c8c8c8" stroke-width="1.6"/><line x1="147.91" y1="591.4" x2="147.91" y2="596.9" stroke="#c8c8c8" stroke-width="1.6"/><line x1="161.27" y1="591.4" x2="161.27" y2="596.9" stroke="#c8c8c8" stroke-width="1.6"/><line x1="174.63" y1="591.4" x2="174.63" y2="596.9" stroke="#c8c8c8" stroke-width="1.6"/><line x1="187.99" y1="591.4" x2="187.99" y2="596.9" stroke="#c8c8c8" stroke-width="1.6"/><line x1="201.34" y1="591.4" x2="201.34" y2="596.9" stroke="#c8c8c8" stroke-width="1.6"/><line x1="214.70" y1="591.4" x2="214.70" y2="596.9" stroke="#c8c8c8" stroke-width="1.6"/><line x1="228.06" y1="591.4" x2="228.06" y2="596.9" stroke="#c8c8c8" stroke-width="1.6"/><line x1="241.41" y1="591.4" x2="241.41" y2="596.9" stroke="#c8c8c8" stroke-width="1.6"/><line x1="254.77" y1="591.4" x2="254.77" y2="596.9" stroke="#c8c8c8" stroke-width="1.6"/><line x1="268.13" y1="591.4" x2="268.13" y2="596.9" stroke="#c8c8c8" stroke-width="1.6"/><line x1="281.49" y1="591.4" x2="281.49" y2="596.9" stroke="#c8c8c8" stroke-width="1.6"/><line x1="294.84" y1="591.4" x2="294.84" y2="596.9" stroke="#c8c8c8" stroke-width="1.6"/><line x1="308.20" y1="591.4" x2="308.20" y2="596.9" stroke="#c8c8c8" stroke-width="1.6"/><text x="34.4" y="611.9" font-size="14.6" text-anchor="middle" fill="#d9d9d9" textLength="7.70" lengthAdjust="spacingAndGlyphs" stroke="#d9d9d9" stroke-width="0.25">0</text><text x="47.7" y="631.7" font-size="14.6" text-anchor="middle" fill="#d9d9d9" textLength="7.70" lengthAdjust="spacingAndGlyphs" stroke="#d9d9d9" stroke-width="0.25">5</text><text x="61.1" y="611.9" font-size="14.6" text-anchor="middle" fill="#d9d9d9" textLength="15.40" lengthAdjust="spacingAndGlyphs" stroke="#d9d9d9" stroke-width="0.25">10</text><text x="74.5" y="631.7" font-size="14.6" text-anchor="middle" fill="#d9d9d9" textLength="15.40" lengthAdjust="spacingAndGlyphs" stroke="#d9d9d9" stroke-width="0.25">15</text><text x="87.8" y="611.9" font-size="14.6" text-anchor="middle" fill="#d9d9d9" textLength="15.40" lengthAdjust="spacingAndGlyphs" stroke="#d9d9d9" stroke-width="0.25">20</text><text x="101.2" y="631.7" font-size="14.6" text-anchor="middle" fill="#d9d9d9" textLength="15.40" lengthAdjust="spacingAndGlyphs" stroke="#d9d9d9" stroke-width="0.25">25</text><text x="114.5" y="611.9" font-size="14.6" text-anchor="middle" fill="#d9d9d9" textLength="15.40" lengthAdjust="spacingAndGlyphs" stroke="#d9d9d9" stroke-width="0.25">30</text><text x="127.9" y="631.7" font-size="14.6" text-anchor="middle" fill="#d9d9d9" textLength="15.40" lengthAdjust="spacingAndGlyphs" stroke="#d9d9d9" stroke-width="0.25">35</text><text x="141.2" y="611.9" font-size="14.6" text-anchor="middle" fill="#d9d9d9" textLength="15.40" lengthAdjust="spacingAndGlyphs" stroke="#d9d9d9" stroke-width="0.25">40</text><text x="154.6" y="631.7" font-size="14.6" text-anchor="middle" fill="#d9d9d9" textLength="15.40" lengthAdjust="spacingAndGlyphs" stroke="#d9d9d9" stroke-width="0.25">45</text><text x="167.9" y="611.9" font-size="14.6" text-anchor="middle" fill="#d9d9d9" textLength="15.40" lengthAdjust="spacingAndGlyphs" stroke="#d9d9d9" stroke-width="0.25">50</text><text x="181.3" y="631.7" font-size="14.6" text-anchor="middle" fill="#d9d9d9" textLength="15.40" lengthAdjust="spacingAndGlyphs" stroke="#d9d9d9" stroke-width="0.25">55</text><text x="194.7" y="611.9" font-size="14.6" text-anchor="middle" fill="#d9d9d9" textLength="15.40" lengthAdjust="spacingAndGlyphs" stroke="#d9d9d9" stroke-width="0.25">60</text><text x="208.0" y="631.7" font-size="14.6" text-anchor="middle" fill="#d9d9d9" textLength="15.40" lengthAdjust="spacingAndGlyphs" stroke="#d9d9d9" stroke-width="0.25">65</text><text x="221.4" y="611.9" font-size="14.6" text-anchor="middle" fill="#d9d9d9" textLength="15.40" lengthAdjust="spacingAndGlyphs" stroke="#d9d9d9" stroke-width="0.25">70</text><text x="234.7" y="631.7" font-size="14.6" text-anchor="middle" fill="#d9d9d9" textLength="15.40" lengthAdjust="spacingAndGlyphs" stroke="#d9d9d9" stroke-width="0.25">75</text><text x="248.1" y="611.9" font-size="14.6" text-anchor="middle" fill="#d9d9d9" textLength="15.40" lengthAdjust="spacingAndGlyphs" stroke="#d9d9d9" stroke-width="0.25">80</text><text x="261.4" y="631.7" font-size="14.6" text-anchor="middle" fill="#d9d9d9" textLength="15.40" lengthAdjust="spacingAndGlyphs" stroke="#d9d9d9" stroke-width="0.25">85</text><text x="274.8" y="611.9" font-size="14.6" text-anchor="middle" fill="#d9d9d9" textLength="15.40" lengthAdjust="spacingAndGlyphs" stroke="#d9d9d9" stroke-width="0.25">90</text><text x="288.2" y="631.7" font-size="14.6" text-anchor="middle" fill="#d9d9d9" textLength="15.40" lengthAdjust="spacingAndGlyphs" stroke="#d9d9d9" stroke-width="0.25">95</text><text x="301.5" y="611.9" font-size="14.6" text-anchor="middle" fill="#d9d9d9" textLength="23.10" lengthAdjust="spacingAndGlyphs" stroke="#d9d9d9" stroke-width="0.25">100</text><text x="157" y="431.3" font-size="13.4" text-anchor="middle" fill="#dedede" textLength="63.5" lengthAdjust="spacingAndGlyphs" >DeltaE ITP</text></g>
<g id="rgb1" class="sh"><rect x="362" y="130" width="827" height="212.60000000000002" fill="#232323"/><line x1="362" y1="151.2" x2="1189" y2="151.2" stroke="#888888" stroke-width="1.5"/><line x1="362" y1="193.8" x2="1189" y2="193.8" stroke="#888888" stroke-width="1.5"/><line x1="362" y1="236.4" x2="1189" y2="236.4" stroke="#888888" stroke-width="1.5"/><line x1="362" y1="279" x2="1189" y2="279" stroke="#888888" stroke-width="1.5"/><line x1="362" y1="321.7" x2="1189" y2="321.7" stroke="#888888" stroke-width="1.5"/><clipPath id="cp130"><rect x="362" y="130" width="827" height="212.60000000000002"/></clipPath><polyline points="362.0,236.5 403.4,236.5 444.7,236.6 486.1,236.7 527.4,236.9 568.8,237.4 610.1,238.2 651.5,240.1 692.8,240.8 734.2,240.9 775.5,242.7 816.9,241.7 858.2,243.7 899.6,245.6 940.9,246.9 982.2,248.2 1023.6,249.1 1065.0,249.2 1106.3,249.8 1147.7,249.8 1189.0,250.8" fill="none" stroke="#008000" stroke-width="3" stroke-linejoin="round" stroke-linecap="butt" clip-path="url(#cp130)"/><polyline points="362.0,236.5 403.4,236.3 444.7,236 486.1,235.6 527.4,235 568.8,234 610.1,231.8 651.5,227.9 692.8,227.8 734.2,227.6 775.5,223.4 816.9,225.3 858.2,222.4 899.6,219.5 940.9,217.6 982.2,216 1023.6,214 1065.0,214 1106.3,212.7 1147.7,213.4 1189.0,210.5" fill="none" stroke="#ff0000" stroke-width="3" stroke-linejoin="round" stroke-linecap="butt" clip-path="url(#cp130)"/><polyline points="362.0,236.5 403.4,235.8 444.7,235 486.1,234 527.4,231.8 568.8,229.2 610.1,226 651.5,222.1 692.8,218.2 734.2,212.4 775.5,209 816.9,212.4 858.2,205 899.6,200.5 940.9,194.7 982.2,189.2 1023.6,182.8 1065.0,180.9 1106.3,179.6 1147.7,178.3 1189.0,183.7" fill="none" stroke="#0000ff" stroke-width="3" stroke-linejoin="round" stroke-linecap="butt" clip-path="url(#cp130)"/><rect x="362" y="130" width="827" height="212.60000000000002" fill="none" stroke="#929292" stroke-width="1.6"/><line x1="355.5" y1="151.2" x2="362" y2="151.2" stroke="#cfcfcf" stroke-width="1.6"/><text x="355" y="156.79999999999998" font-size="14.6" text-anchor="end" fill="#d9d9d9" textLength="23.10" lengthAdjust="spacingAndGlyphs" stroke="#d9d9d9" stroke-width="0.25">104</text><line x1="355.5" y1="193.8" x2="362" y2="193.8" stroke="#cfcfcf" stroke-width="1.6"/><text x="355" y="199.4" font-size="14.6" text-anchor="end" fill="#d9d9d9" textLength="23.10" lengthAdjust="spacingAndGlyphs" stroke="#d9d9d9" stroke-width="0.25">102</text><line x1="355.5" y1="236.4" x2="362" y2="236.4" stroke="#cfcfcf" stroke-width="1.6"/><text x="355" y="242.0" font-size="14.6" text-anchor="end" fill="#d9d9d9" textLength="23.10" lengthAdjust="spacingAndGlyphs" stroke="#d9d9d9" stroke-width="0.25">100</text><line x1="355.5" y1="279" x2="362" y2="279" stroke="#cfcfcf" stroke-width="1.6"/><text x="355" y="284.6" font-size="14.6" text-anchor="end" fill="#d9d9d9" textLength="15.40" lengthAdjust="spacingAndGlyphs" stroke="#d9d9d9" stroke-width="0.25">98</text><line x1="355.5" y1="321.7" x2="362" y2="321.7" stroke="#cfcfcf" stroke-width="1.6"/><text x="355" y="327.3" font-size="14.6" text-anchor="end" fill="#d9d9d9" textLength="15.40" lengthAdjust="spacingAndGlyphs" stroke="#d9d9d9" stroke-width="0.25">96</text><line x1="362.00" y1="342.6" x2="362.00" y2="349.1" stroke="#cfcfcf" stroke-width="1.6"/><text x="361.2" y="364.2" font-size="14.6" text-anchor="middle" fill="#d9d9d9" textLength="7.70" lengthAdjust="spacingAndGlyphs" stroke="#d9d9d9" stroke-width="0.25">0</text><line x1="403.35" y1="342.6" x2="403.35" y2="349.1" stroke="#cfcfcf" stroke-width="1.6"/><text x="402.6" y="364.2" font-size="14.6" text-anchor="middle" fill="#d9d9d9" textLength="7.70" lengthAdjust="spacingAndGlyphs" stroke="#d9d9d9" stroke-width="0.25">5</text><line x1="444.70" y1="342.6" x2="444.70" y2="349.1" stroke="#cfcfcf" stroke-width="1.6"/><text x="443.9" y="364.2" font-size="14.6" text-anchor="middle" fill="#d9d9d9" textLength="15.40" lengthAdjust="spacingAndGlyphs" stroke="#d9d9d9" stroke-width="0.25">10</text><line x1="486.05" y1="342.6" x2="486.05" y2="349.1" stroke="#cfcfcf" stroke-width="1.6"/><text x="485.2" y="364.2" font-size="14.6" text-anchor="middle" fill="#d9d9d9" textLength="15.40" lengthAdjust="spacingAndGlyphs" stroke="#d9d9d9" stroke-width="0.25">15</text><line x1="527.40" y1="342.6" x2="527.40" y2="349.1" stroke="#cfcfcf" stroke-width="1.6"/><text x="526.6" y="364.2" font-size="14.6" text-anchor="middle" fill="#d9d9d9" textLength="15.40" lengthAdjust="spacingAndGlyphs" stroke="#d9d9d9" stroke-width="0.25">20</text><line x1="568.75" y1="342.6" x2="568.75" y2="349.1" stroke="#cfcfcf" stroke-width="1.6"/><text x="568.0" y="364.2" font-size="14.6" text-anchor="middle" fill="#d9d9d9" textLength="15.40" lengthAdjust="spacingAndGlyphs" stroke="#d9d9d9" stroke-width="0.25">25</text><line x1="610.10" y1="342.6" x2="610.10" y2="349.1" stroke="#cfcfcf" stroke-width="1.6"/><text x="609.3" y="364.2" font-size="14.6" text-anchor="middle" fill="#d9d9d9" textLength="15.40" lengthAdjust="spacingAndGlyphs" stroke="#d9d9d9" stroke-width="0.25">30</text><line x1="651.45" y1="342.6" x2="651.45" y2="349.1" stroke="#cfcfcf" stroke-width="1.6"/><text x="650.7" y="364.2" font-size="14.6" text-anchor="middle" fill="#d9d9d9" textLength="15.40" lengthAdjust="spacingAndGlyphs" stroke="#d9d9d9" stroke-width="0.25">35</text><line x1="692.80" y1="342.6" x2="692.80" y2="349.1" stroke="#cfcfcf" stroke-width="1.6"/><text x="692.0" y="364.2" font-size="14.6" text-anchor="middle" fill="#d9d9d9" textLength="15.40" lengthAdjust="spacingAndGlyphs" stroke="#d9d9d9" stroke-width="0.25">40</text><line x1="734.15" y1="342.6" x2="734.15" y2="349.1" stroke="#cfcfcf" stroke-width="1.6"/><text x="733.4" y="364.2" font-size="14.6" text-anchor="middle" fill="#d9d9d9" textLength="15.40" lengthAdjust="spacingAndGlyphs" stroke="#d9d9d9" stroke-width="0.25">45</text><line x1="775.50" y1="342.6" x2="775.50" y2="349.1" stroke="#cfcfcf" stroke-width="1.6"/><text x="774.7" y="364.2" font-size="14.6" text-anchor="middle" fill="#d9d9d9" textLength="15.40" lengthAdjust="spacingAndGlyphs" stroke="#d9d9d9" stroke-width="0.25">50</text><line x1="816.85" y1="342.6" x2="816.85" y2="349.1" stroke="#cfcfcf" stroke-width="1.6"/><text x="816.1" y="364.2" font-size="14.6" text-anchor="middle" fill="#d9d9d9" textLength="15.40" lengthAdjust="spacingAndGlyphs" stroke="#d9d9d9" stroke-width="0.25">55</text><line x1="858.20" y1="342.6" x2="858.20" y2="349.1" stroke="#cfcfcf" stroke-width="1.6"/><text x="857.4" y="364.2" font-size="14.6" text-anchor="middle" fill="#d9d9d9" textLength="15.40" lengthAdjust="spacingAndGlyphs" stroke="#d9d9d9" stroke-width="0.25">60</text><line x1="899.55" y1="342.6" x2="899.55" y2="349.1" stroke="#cfcfcf" stroke-width="1.6"/><text x="898.8" y="364.2" font-size="14.6" text-anchor="middle" fill="#d9d9d9" textLength="15.40" lengthAdjust="spacingAndGlyphs" stroke="#d9d9d9" stroke-width="0.25">65</text><line x1="940.90" y1="342.6" x2="940.90" y2="349.1" stroke="#cfcfcf" stroke-width="1.6"/><text x="940.1" y="364.2" font-size="14.6" text-anchor="middle" fill="#d9d9d9" textLength="15.40" lengthAdjust="spacingAndGlyphs" stroke="#d9d9d9" stroke-width="0.25">70</text><line x1="982.25" y1="342.6" x2="982.25" y2="349.1" stroke="#cfcfcf" stroke-width="1.6"/><text x="981.5" y="364.2" font-size="14.6" text-anchor="middle" fill="#d9d9d9" textLength="15.40" lengthAdjust="spacingAndGlyphs" stroke="#d9d9d9" stroke-width="0.25">75</text><line x1="1023.60" y1="342.6" x2="1023.60" y2="349.1" stroke="#cfcfcf" stroke-width="1.6"/><text x="1022.8" y="364.2" font-size="14.6" text-anchor="middle" fill="#d9d9d9" textLength="15.40" lengthAdjust="spacingAndGlyphs" stroke="#d9d9d9" stroke-width="0.25">80</text><line x1="1064.95" y1="342.6" x2="1064.95" y2="349.1" stroke="#cfcfcf" stroke-width="1.6"/><text x="1064.2" y="364.2" font-size="14.6" text-anchor="middle" fill="#d9d9d9" textLength="15.40" lengthAdjust="spacingAndGlyphs" stroke="#d9d9d9" stroke-width="0.25">85</text><line x1="1106.30" y1="342.6" x2="1106.30" y2="349.1" stroke="#cfcfcf" stroke-width="1.6"/><text x="1105.5" y="364.2" font-size="14.6" text-anchor="middle" fill="#d9d9d9" textLength="15.40" lengthAdjust="spacingAndGlyphs" stroke="#d9d9d9" stroke-width="0.25">90</text><line x1="1147.65" y1="342.6" x2="1147.65" y2="349.1" stroke="#cfcfcf" stroke-width="1.6"/><text x="1146.9" y="364.2" font-size="14.6" text-anchor="middle" fill="#d9d9d9" textLength="15.40" lengthAdjust="spacingAndGlyphs" stroke="#d9d9d9" stroke-width="0.25">95</text><line x1="1189.00" y1="342.6" x2="1189.00" y2="349.1" stroke="#cfcfcf" stroke-width="1.6"/><text x="1188.2" y="364.2" font-size="14.6" text-anchor="middle" fill="#d9d9d9" textLength="23.10" lengthAdjust="spacingAndGlyphs" stroke="#d9d9d9" stroke-width="0.25">100</text><text x="588" y="119.6" font-size="19" text-anchor="start" fill="#f2f2f2" textLength="287" lengthAdjust="spacingAndGlyphs" >RGB Balance, without Luminance</text></g>
<g id="rgb2" class="sh"><rect x="362" y="404" width="827" height="206.20000000000005" fill="#232323"/><line x1="362" y1="425" x2="1189" y2="425" stroke="#888888" stroke-width="1.5"/><line x1="362" y1="466.5" x2="1189" y2="466.5" stroke="#888888" stroke-width="1.5"/><line x1="362" y1="507.6" x2="1189" y2="507.6" stroke="#888888" stroke-width="1.5"/><line x1="362" y1="549" x2="1189" y2="549" stroke="#888888" stroke-width="1.5"/><line x1="362" y1="590.5" x2="1189" y2="590.5" stroke="#888888" stroke-width="1.5"/><clipPath id="cp404"><rect x="362" y="404" width="827" height="206.20000000000005"/></clipPath><polyline points="362.0,506.9 403.4,506.3 444.7,505.6 486.1,505 527.4,504.4 568.8,502.8 610.1,501.6 651.5,505 692.8,504.4 734.2,508.4 775.5,514.3 816.9,516.8 858.2,528 899.6,533.6 940.9,533.3 982.2,535.2 1023.6,606.4 1065.0,556.6 1106.3,523.7 1147.7,524.6 1189.0,521.5" fill="none" stroke="#008000" stroke-width="3" stroke-linejoin="round" stroke-linecap="butt" clip-path="url(#cp404)"/><polyline points="362.0,506.9 403.4,506 444.7,504.6 486.1,503.7 527.4,502.2 568.8,498.5 610.1,495 651.5,493.2 692.8,491 734.2,494.4 775.5,495 816.9,500 858.2,507.2 899.6,507.8 940.9,505 982.2,503.1 1023.6,571.6 1065.0,522.4 1106.3,487 1147.7,489.1 1189.0,481.4" fill="none" stroke="#ff0000" stroke-width="3" stroke-linejoin="round" stroke-linecap="butt" clip-path="url(#cp404)"/><polyline points="362.0,506.9 403.4,505.6 444.7,503.7 486.1,502.5 527.4,499.1 568.8,494.4 610.1,488.8 651.5,487 692.8,482.6 734.2,479.8 775.5,480.4 816.9,487.6 858.2,490.7 899.6,489.4 940.9,482 982.2,477.9 1023.6,541.1 1065.0,489.8 1106.3,454.6 1147.7,454.6 1189.0,455.5" fill="none" stroke="#0000ff" stroke-width="3" stroke-linejoin="round" stroke-linecap="butt" clip-path="url(#cp404)"/><rect x="362" y="404" width="827" height="206.20000000000005" fill="none" stroke="#929292" stroke-width="1.6"/><line x1="355.5" y1="425" x2="362" y2="425" stroke="#cfcfcf" stroke-width="1.6"/><text x="355" y="430.6" font-size="14.6" text-anchor="end" fill="#d9d9d9" textLength="23.10" lengthAdjust="spacingAndGlyphs" stroke="#d9d9d9" stroke-width="0.25">104</text><line x1="355.5" y1="466.5" x2="362" y2="466.5" stroke="#cfcfcf" stroke-width="1.6"/><text x="355" y="472.1" font-size="14.6" text-anchor="end" fill="#d9d9d9" textLength="23.10" lengthAdjust="spacingAndGlyphs" stroke="#d9d9d9" stroke-width="0.25">102</text><line x1="355.5" y1="507.6" x2="362" y2="507.6" stroke="#cfcfcf" stroke-width="1.6"/><text x="355" y="513.2" font-size="14.6" text-anchor="end" fill="#d9d9d9" textLength="23.10" lengthAdjust="spacingAndGlyphs" stroke="#d9d9d9" stroke-width="0.25">100</text><line x1="355.5" y1="549" x2="362" y2="549" stroke="#cfcfcf" stroke-width="1.6"/><text x="355" y="554.6" font-size="14.6" text-anchor="end" fill="#d9d9d9" textLength="15.40" lengthAdjust="spacingAndGlyphs" stroke="#d9d9d9" stroke-width="0.25">98</text><line x1="355.5" y1="590.5" x2="362" y2="590.5" stroke="#cfcfcf" stroke-width="1.6"/><text x="355" y="596.1" font-size="14.6" text-anchor="end" fill="#d9d9d9" textLength="15.40" lengthAdjust="spacingAndGlyphs" stroke="#d9d9d9" stroke-width="0.25">96</text><line x1="362.00" y1="610.2" x2="362.00" y2="616.7" stroke="#cfcfcf" stroke-width="1.6"/><text x="361.2" y="632.2" font-size="14.6" text-anchor="middle" fill="#d9d9d9" textLength="7.70" lengthAdjust="spacingAndGlyphs" stroke="#d9d9d9" stroke-width="0.25">0</text><line x1="403.35" y1="610.2" x2="403.35" y2="616.7" stroke="#cfcfcf" stroke-width="1.6"/><text x="402.6" y="632.2" font-size="14.6" text-anchor="middle" fill="#d9d9d9" textLength="7.70" lengthAdjust="spacingAndGlyphs" stroke="#d9d9d9" stroke-width="0.25">5</text><line x1="444.70" y1="610.2" x2="444.70" y2="616.7" stroke="#cfcfcf" stroke-width="1.6"/><text x="443.9" y="632.2" font-size="14.6" text-anchor="middle" fill="#d9d9d9" textLength="15.40" lengthAdjust="spacingAndGlyphs" stroke="#d9d9d9" stroke-width="0.25">10</text><line x1="486.05" y1="610.2" x2="486.05" y2="616.7" stroke="#cfcfcf" stroke-width="1.6"/><text x="485.2" y="632.2" font-size="14.6" text-anchor="middle" fill="#d9d9d9" textLength="15.40" lengthAdjust="spacingAndGlyphs" stroke="#d9d9d9" stroke-width="0.25">15</text><line x1="527.40" y1="610.2" x2="527.40" y2="616.7" stroke="#cfcfcf" stroke-width="1.6"/><text x="526.6" y="632.2" font-size="14.6" text-anchor="middle" fill="#d9d9d9" textLength="15.40" lengthAdjust="spacingAndGlyphs" stroke="#d9d9d9" stroke-width="0.25">20</text><line x1="568.75" y1="610.2" x2="568.75" y2="616.7" stroke="#cfcfcf" stroke-width="1.6"/><text x="568.0" y="632.2" font-size="14.6" text-anchor="middle" fill="#d9d9d9" textLength="15.40" lengthAdjust="spacingAndGlyphs" stroke="#d9d9d9" stroke-width="0.25">25</text><line x1="610.10" y1="610.2" x2="610.10" y2="616.7" stroke="#cfcfcf" stroke-width="1.6"/><text x="609.3" y="632.2" font-size="14.6" text-anchor="middle" fill="#d9d9d9" textLength="15.40" lengthAdjust="spacingAndGlyphs" stroke="#d9d9d9" stroke-width="0.25">30</text><line x1="651.45" y1="610.2" x2="651.45" y2="616.7" stroke="#cfcfcf" stroke-width="1.6"/><text x="650.7" y="632.2" font-size="14.6" text-anchor="middle" fill="#d9d9d9" textLength="15.40" lengthAdjust="spacingAndGlyphs" stroke="#d9d9d9" stroke-width="0.25">35</text><line x1="692.80" y1="610.2" x2="692.80" y2="616.7" stroke="#cfcfcf" stroke-width="1.6"/><text x="692.0" y="632.2" font-size="14.6" text-anchor="middle" fill="#d9d9d9" textLength="15.40" lengthAdjust="spacingAndGlyphs" stroke="#d9d9d9" stroke-width="0.25">40</text><line x1="734.15" y1="610.2" x2="734.15" y2="616.7" stroke="#cfcfcf" stroke-width="1.6"/><text x="733.4" y="632.2" font-size="14.6" text-anchor="middle" fill="#d9d9d9" textLength="15.40" lengthAdjust="spacingAndGlyphs" stroke="#d9d9d9" stroke-width="0.25">45</text><line x1="775.50" y1="610.2" x2="775.50" y2="616.7" stroke="#cfcfcf" stroke-width="1.6"/><text x="774.7" y="632.2" font-size="14.6" text-anchor="middle" fill="#d9d9d9" textLength="15.40" lengthAdjust="spacingAndGlyphs" stroke="#d9d9d9" stroke-width="0.25">50</text><line x1="816.85" y1="610.2" x2="816.85" y2="616.7" stroke="#cfcfcf" stroke-width="1.6"/><text x="816.1" y="632.2" font-size="14.6" text-anchor="middle" fill="#d9d9d9" textLength="15.40" lengthAdjust="spacingAndGlyphs" stroke="#d9d9d9" stroke-width="0.25">55</text><line x1="858.20" y1="610.2" x2="858.20" y2="616.7" stroke="#cfcfcf" stroke-width="1.6"/><text x="857.4" y="632.2" font-size="14.6" text-anchor="middle" fill="#d9d9d9" textLength="15.40" lengthAdjust="spacingAndGlyphs" stroke="#d9d9d9" stroke-width="0.25">60</text><line x1="899.55" y1="610.2" x2="899.55" y2="616.7" stroke="#cfcfcf" stroke-width="1.6"/><text x="898.8" y="632.2" font-size="14.6" text-anchor="middle" fill="#d9d9d9" textLength="15.40" lengthAdjust="spacingAndGlyphs" stroke="#d9d9d9" stroke-width="0.25">65</text><line x1="940.90" y1="610.2" x2="940.90" y2="616.7" stroke="#cfcfcf" stroke-width="1.6"/><text x="940.1" y="632.2" font-size="14.6" text-anchor="middle" fill="#d9d9d9" textLength="15.40" lengthAdjust="spacingAndGlyphs" stroke="#d9d9d9" stroke-width="0.25">70</text><line x1="982.25" y1="610.2" x2="982.25" y2="616.7" stroke="#cfcfcf" stroke-width="1.6"/><text x="981.5" y="632.2" font-size="14.6" text-anchor="middle" fill="#d9d9d9" textLength="15.40" lengthAdjust="spacingAndGlyphs" stroke="#d9d9d9" stroke-width="0.25">75</text><line x1="1023.60" y1="610.2" x2="1023.60" y2="616.7" stroke="#cfcfcf" stroke-width="1.6"/><text x="1022.8" y="632.2" font-size="14.6" text-anchor="middle" fill="#d9d9d9" textLength="15.40" lengthAdjust="spacingAndGlyphs" stroke="#d9d9d9" stroke-width="0.25">80</text><line x1="1064.95" y1="610.2" x2="1064.95" y2="616.7" stroke="#cfcfcf" stroke-width="1.6"/><text x="1064.2" y="632.2" font-size="14.6" text-anchor="middle" fill="#d9d9d9" textLength="15.40" lengthAdjust="spacingAndGlyphs" stroke="#d9d9d9" stroke-width="0.25">85</text><line x1="1106.30" y1="610.2" x2="1106.30" y2="616.7" stroke="#cfcfcf" stroke-width="1.6"/><text x="1105.5" y="632.2" font-size="14.6" text-anchor="middle" fill="#d9d9d9" textLength="15.40" lengthAdjust="spacingAndGlyphs" stroke="#d9d9d9" stroke-width="0.25">90</text><line x1="1147.65" y1="610.2" x2="1147.65" y2="616.7" stroke="#cfcfcf" stroke-width="1.6"/><text x="1146.9" y="632.2" font-size="14.6" text-anchor="middle" fill="#d9d9d9" textLength="15.40" lengthAdjust="spacingAndGlyphs" stroke="#d9d9d9" stroke-width="0.25">95</text><line x1="1189.00" y1="610.2" x2="1189.00" y2="616.7" stroke="#cfcfcf" stroke-width="1.6"/><text x="1188.2" y="632.2" font-size="14.6" text-anchor="middle" fill="#d9d9d9" textLength="23.10" lengthAdjust="spacingAndGlyphs" stroke="#d9d9d9" stroke-width="0.25">100</text><text x="588" y="393.4" font-size="19" text-anchor="start" fill="#f2f2f2" textLength="257" lengthAdjust="spacingAndGlyphs" >RGB Balance, with Luminance</text></g>
<g id="eotf" class="sh"><rect x="1238.3" y="104.4" width="342.20000000000005" height="330.79999999999995" fill="#232323"/><line x1="1238.3" y1="402.12" x2="1580.5" y2="402.12" stroke="#888888" stroke-width="1.4"/><line x1="1238.3" y1="369.03999999999996" x2="1580.5" y2="369.03999999999996" stroke="#888888" stroke-width="1.4"/><line x1="1238.3" y1="335.96000000000004" x2="1580.5" y2="335.96000000000004" stroke="#888888" stroke-width="1.4"/><line x1="1238.3" y1="302.88" x2="1580.5" y2="302.88" stroke="#888888" stroke-width="1.4"/><line x1="1238.3" y1="269.8" x2="1580.5" y2="269.8" stroke="#888888" stroke-width="1.4"/><line x1="1238.3" y1="236.72000000000003" x2="1580.5" y2="236.72000000000003" stroke="#888888" stroke-width="1.4"/><line x1="1238.3" y1="203.64000000000004" x2="1580.5" y2="203.64000000000004" stroke="#888888" stroke-width="1.4"/><line x1="1238.3" y1="170.56" x2="1580.5" y2="170.56" stroke="#888888" stroke-width="1.4"/><line x1="1238.3" y1="137.48000000000002" x2="1580.5" y2="137.48000000000002" stroke="#888888" stroke-width="1.4"/><polyline points="1238.3,435.2 1516.2,165.4 1580.5,165.4" fill="none" stroke="#ffff00" stroke-width="2.6" stroke-linejoin="miter"/><polyline points="1238.3,435.2 1255.4,413.4 1272.5,397.5 1289.6,382.3 1306.7,366.9 1323.8,350.7 1341.0,334.5 1358.1,318.3 1375.2,302.1 1392.3,285.8 1409.4,269.6 1426.5,253.6 1443.6,237.4 1460.7,221.1 1477.8,204.9 1495.0,188.8 1512.1,172.7 1529.2,167.4 1546.3,165.8 1563.4,165.7 1580.5,165.6" fill="none" stroke="#8d8d8d" stroke-width="2.6" stroke-linejoin="round"/><rect x="1238.3" y="104.4" width="342.20000000000005" height="330.79999999999995" fill="none" stroke="#929292" stroke-width="1.6"/><line x1="1238.3" y1="104.4" x2="1580.5" y2="104.4" stroke="#999" stroke-width="2.4"/><line x1="1232.8" y1="104.4" x2="1238.3" y2="104.4" stroke="#cfcfcf" stroke-width="1.5"/><text x="1232.0" y="110.0" font-size="14.6" text-anchor="end" fill="#d9d9d9" textLength="7.70" lengthAdjust="spacingAndGlyphs" stroke="#d9d9d9" stroke-width="0.25">1</text><line x1="1232.8" y1="137.5" x2="1238.3" y2="137.5" stroke="#cfcfcf" stroke-width="1.5"/><text x="1232.0" y="143.1" font-size="14.6" text-anchor="end" fill="#d9d9d9" textLength="18.80" lengthAdjust="spacingAndGlyphs" stroke="#d9d9d9" stroke-width="0.25">0.9</text><line x1="1232.8" y1="170.6" x2="1238.3" y2="170.6" stroke="#cfcfcf" stroke-width="1.5"/><text x="1232.0" y="176.2" font-size="14.6" text-anchor="end" fill="#d9d9d9" textLength="18.80" lengthAdjust="spacingAndGlyphs" stroke="#d9d9d9" stroke-width="0.25">0.8</text><line x1="1232.8" y1="203.6" x2="1238.3" y2="203.6" stroke="#cfcfcf" stroke-width="1.5"/><text x="1232.0" y="209.2" font-size="14.6" text-anchor="end" fill="#d9d9d9" textLength="18.80" lengthAdjust="spacingAndGlyphs" stroke="#d9d9d9" stroke-width="0.25">0.7</text><line x1="1232.8" y1="236.7" x2="1238.3" y2="236.7" stroke="#cfcfcf" stroke-width="1.5"/><text x="1232.0" y="242.3" font-size="14.6" text-anchor="end" fill="#d9d9d9" textLength="18.80" lengthAdjust="spacingAndGlyphs" stroke="#d9d9d9" stroke-width="0.25">0.6</text><line x1="1232.8" y1="269.8" x2="1238.3" y2="269.8" stroke="#cfcfcf" stroke-width="1.5"/><text x="1232.0" y="275.4" font-size="14.6" text-anchor="end" fill="#d9d9d9" textLength="18.80" lengthAdjust="spacingAndGlyphs" stroke="#d9d9d9" stroke-width="0.25">0.5</text><line x1="1232.8" y1="302.9" x2="1238.3" y2="302.9" stroke="#cfcfcf" stroke-width="1.5"/><text x="1232.0" y="308.5" font-size="14.6" text-anchor="end" fill="#d9d9d9" textLength="18.80" lengthAdjust="spacingAndGlyphs" stroke="#d9d9d9" stroke-width="0.25">0.4</text><line x1="1232.8" y1="336.0" x2="1238.3" y2="336.0" stroke="#cfcfcf" stroke-width="1.5"/><text x="1232.0" y="341.6" font-size="14.6" text-anchor="end" fill="#d9d9d9" textLength="18.80" lengthAdjust="spacingAndGlyphs" stroke="#d9d9d9" stroke-width="0.25">0.3</text><line x1="1232.8" y1="369.0" x2="1238.3" y2="369.0" stroke="#cfcfcf" stroke-width="1.5"/><text x="1232.0" y="374.6" font-size="14.6" text-anchor="end" fill="#d9d9d9" textLength="18.80" lengthAdjust="spacingAndGlyphs" stroke="#d9d9d9" stroke-width="0.25">0.2</text><line x1="1232.8" y1="402.1" x2="1238.3" y2="402.1" stroke="#cfcfcf" stroke-width="1.5"/><text x="1232.0" y="407.7" font-size="14.6" text-anchor="end" fill="#d9d9d9" textLength="18.80" lengthAdjust="spacingAndGlyphs" stroke="#d9d9d9" stroke-width="0.25">0.1</text><line x1="1232.8" y1="435.2" x2="1238.3" y2="435.2" stroke="#cfcfcf" stroke-width="1.5"/><text x="1232.0" y="440.8" font-size="14.6" text-anchor="end" fill="#d9d9d9" textLength="7.70" lengthAdjust="spacingAndGlyphs" stroke="#d9d9d9" stroke-width="0.25">0</text><line x1="1238.3" y1="435.2" x2="1238.3" y2="440.7" stroke="#cfcfcf" stroke-width="1.4"/><text x="1237.9" y="455.6" font-size="14.6" text-anchor="middle" fill="#d9d9d9" textLength="7.70" lengthAdjust="spacingAndGlyphs" stroke="#d9d9d9" stroke-width="0.25">0</text><line x1="1306.7" y1="435.2" x2="1306.7" y2="440.7" stroke="#cfcfcf" stroke-width="1.4"/><text x="1306.3" y="455.6" font-size="14.6" text-anchor="middle" fill="#d9d9d9" textLength="15.40" lengthAdjust="spacingAndGlyphs" stroke="#d9d9d9" stroke-width="0.25">20</text><line x1="1375.2" y1="435.2" x2="1375.2" y2="440.7" stroke="#cfcfcf" stroke-width="1.4"/><text x="1374.8" y="455.6" font-size="14.6" text-anchor="middle" fill="#d9d9d9" textLength="15.40" lengthAdjust="spacingAndGlyphs" stroke="#d9d9d9" stroke-width="0.25">40</text><line x1="1443.6" y1="435.2" x2="1443.6" y2="440.7" stroke="#cfcfcf" stroke-width="1.4"/><text x="1443.2" y="455.6" font-size="14.6" text-anchor="middle" fill="#d9d9d9" textLength="15.40" lengthAdjust="spacingAndGlyphs" stroke="#d9d9d9" stroke-width="0.25">60</text><line x1="1512.1" y1="435.2" x2="1512.1" y2="440.7" stroke="#cfcfcf" stroke-width="1.4"/><text x="1511.7" y="455.6" font-size="14.6" text-anchor="middle" fill="#d9d9d9" textLength="15.40" lengthAdjust="spacingAndGlyphs" stroke="#d9d9d9" stroke-width="0.25">80</text><line x1="1580.5" y1="435.2" x2="1580.5" y2="440.7" stroke="#cfcfcf" stroke-width="1.4"/><text x="1580.1" y="455.6" font-size="14.6" text-anchor="middle" fill="#d9d9d9" textLength="23.10" lengthAdjust="spacingAndGlyphs" stroke="#d9d9d9" stroke-width="0.25">100</text><text x="1397" y="98.6" font-size="12.6" text-anchor="middle" fill="#dedede" textLength="32" lengthAdjust="spacingAndGlyphs" >EOTF</text></g>
<g id="lum" class="sh"><rect x="1250.9" y="488.6" width="329.5999999999999" height="331.19999999999993" fill="#232323"/><line x1="1250.9" y1="782.0" x2="1580.5" y2="782.0" stroke="#888888" stroke-width="1.5"/><line x1="1250.9" y1="743.0" x2="1580.5" y2="743.0" stroke="#888888" stroke-width="1.5"/><line x1="1250.9" y1="704.0" x2="1580.5" y2="704.0" stroke="#888888" stroke-width="1.5"/><line x1="1250.9" y1="665.0" x2="1580.5" y2="665.0" stroke="#888888" stroke-width="1.5"/><line x1="1250.9" y1="626.0" x2="1580.5" y2="626.0" stroke="#888888" stroke-width="1.5"/><line x1="1250.9" y1="587.0" x2="1580.5" y2="587.0" stroke="#888888" stroke-width="1.5"/><line x1="1250.9" y1="548.0" x2="1580.5" y2="548.0" stroke="#888888" stroke-width="1.5"/><line x1="1250.9" y1="509.0" x2="1580.5" y2="509.0" stroke="#888888" stroke-width="1.5"/><clipPath id="cpl"><rect x="1250.9" y="488.6" width="329.5999999999999" height="332.69999999999993"/></clipPath><polyline points="1250.9,819.8 1254.2,819.8 1257.5,819.8 1260.8,819.8 1264.1,819.8 1267.4,819.8 1270.7,819.8 1274.0,819.8 1277.3,819.8 1280.6,819.8 1283.9,819.7 1287.2,819.7 1290.5,819.7 1293.7,819.7 1297.0,819.6 1300.3,819.6 1303.6,819.6 1306.9,819.5 1310.2,819.5 1313.5,819.4 1316.8,819.3 1320.1,819.2 1323.4,819.1 1326.7,819.0 1330.0,818.9 1333.3,818.8 1336.6,818.6 1339.9,818.5 1343.2,818.3 1346.5,818.1 1349.8,817.8 1353.1,817.6 1356.4,817.3 1359.7,816.9 1363.0,816.6 1366.3,816.2 1369.6,815.7 1372.9,815.2 1376.1,814.7 1379.4,814.1 1382.7,813.4 1386.0,812.7 1389.3,811.9 1392.6,811.0 1395.9,810.0 1399.2,808.9 1402.5,807.7 1405.8,806.4 1409.1,805.0 1412.4,803.4 1415.7,801.6 1419.0,799.7 1422.3,797.6 1425.6,795.3 1428.9,792.8 1432.2,790.1 1435.5,787.0 1438.8,783.7 1442.1,780.1 1445.4,776.1 1448.7,771.7 1452.0,767.0 1455.3,761.7 1458.5,756.0 1461.8,749.8 1465.1,742.9 1468.4,735.4 1471.7,727.2 1475.0,718.2 1478.3,708.3 1481.6,697.5 1484.9,685.7 1488.2,672.8 1491.5,658.6 1494.8,643.1 1498.1,626.1 1501.4,607.5 1504.7,587.1 1508.0,564.8 1511.3,540.3 1514.6,513.5 1516.9,488.9 1580.5,488.9" fill="none" stroke="#ffff00" stroke-width="2.7" stroke-linejoin="miter" clip-path="url(#cpl)"/><polyline points="1250.9,819.8 1254.2,819.8 1257.5,819.8 1260.8,819.8 1264.1,819.8 1267.4,819.8 1270.7,819.8 1274.0,819.8 1277.3,819.8 1280.6,819.8 1283.9,819.7 1287.2,819.7 1290.5,819.7 1293.7,819.7 1297.0,819.6 1300.3,819.6 1303.6,819.6 1306.9,819.5 1310.2,819.5 1313.5,819.4 1316.8,819.3 1320.1,819.2 1323.4,819.1 1326.7,819.0 1330.0,818.9 1333.3,818.8 1336.6,818.6 1339.9,818.5 1343.2,818.3 1346.5,818.1 1349.8,817.8 1353.1,817.6 1356.4,817.3 1359.7,816.9 1363.0,816.6 1366.3,816.2 1369.6,815.7 1372.9,815.2 1376.1,814.7 1379.4,814.1 1382.7,813.4 1386.0,812.7 1389.3,811.9 1392.6,811.0 1395.9,810.0 1399.2,808.9 1402.5,807.7 1405.8,806.4 1409.1,805.0 1412.4,803.4 1415.7,801.6 1419.0,799.7 1422.3,797.6 1425.6,795.3 1428.9,792.8 1432.2,790.1 1435.5,787.0 1438.8,783.7 1442.1,780.1 1445.4,776.1 1448.7,771.7 1452.0,767.0 1455.3,761.7 1458.5,756.2 1461.8,750.1 1465.1,743.4 1468.4,736.2 1471.7,728.2 1475.0,719.6 1478.3,710.1 1481.6,699.8 1484.9,688.5 1488.2,676.1 1491.5,662.7 1494.8,648.0 1498.1,631.9 1514.6,544.1 1531.1,504.1 1547.5,490.2 1564.0,491.8 1580.5,489.7" fill="none" stroke="#8d8d8d" stroke-width="2.7" stroke-linejoin="round" clip-path="url(#cpl)"/><rect x="1250.9" y="488.6" width="329.5999999999999" height="331.19999999999993" fill="none" stroke="#929292" stroke-width="1.6"/><line x1="1245.4" y1="820.6" x2="1250.9" y2="820.6" stroke="#cfcfcf" stroke-width="1.5"/><text x="1244.6000000000001" y="826.2" font-size="14.6" text-anchor="end" fill="#d9d9d9" textLength="7.70" lengthAdjust="spacingAndGlyphs" stroke="#d9d9d9" stroke-width="0.25">0</text><line x1="1245.4" y1="782.0" x2="1250.9" y2="782.0" stroke="#cfcfcf" stroke-width="1.5"/><text x="1244.6000000000001" y="787.6" font-size="14.6" text-anchor="end" fill="#d9d9d9" textLength="23.10" lengthAdjust="spacingAndGlyphs" stroke="#d9d9d9" stroke-width="0.25">200</text><line x1="1245.4" y1="743.0" x2="1250.9" y2="743.0" stroke="#cfcfcf" stroke-width="1.5"/><text x="1244.6000000000001" y="748.6" font-size="14.6" text-anchor="end" fill="#d9d9d9" textLength="23.10" lengthAdjust="spacingAndGlyphs" stroke="#d9d9d9" stroke-width="0.25">400</text><line x1="1245.4" y1="704.0" x2="1250.9" y2="704.0" stroke="#cfcfcf" stroke-width="1.5"/><text x="1244.6000000000001" y="709.6" font-size="14.6" text-anchor="end" fill="#d9d9d9" textLength="23.10" lengthAdjust="spacingAndGlyphs" stroke="#d9d9d9" stroke-width="0.25">600</text><line x1="1245.4" y1="665.0" x2="1250.9" y2="665.0" stroke="#cfcfcf" stroke-width="1.5"/><text x="1244.6000000000001" y="670.6" font-size="14.6" text-anchor="end" fill="#d9d9d9" textLength="23.10" lengthAdjust="spacingAndGlyphs" stroke="#d9d9d9" stroke-width="0.25">800</text><line x1="1245.4" y1="626.0" x2="1250.9" y2="626.0" stroke="#cfcfcf" stroke-width="1.5"/><text x="1244.6000000000001" y="631.6" font-size="14.6" text-anchor="end" fill="#d9d9d9" textLength="30.80" lengthAdjust="spacingAndGlyphs" stroke="#d9d9d9" stroke-width="0.25">1000</text><line x1="1245.4" y1="587.0" x2="1250.9" y2="587.0" stroke="#cfcfcf" stroke-width="1.5"/><text x="1244.6000000000001" y="592.6" font-size="14.6" text-anchor="end" fill="#d9d9d9" textLength="30.80" lengthAdjust="spacingAndGlyphs" stroke="#d9d9d9" stroke-width="0.25">1200</text><line x1="1245.4" y1="548.0" x2="1250.9" y2="548.0" stroke="#cfcfcf" stroke-width="1.5"/><text x="1244.6000000000001" y="553.6" font-size="14.6" text-anchor="end" fill="#d9d9d9" textLength="30.80" lengthAdjust="spacingAndGlyphs" stroke="#d9d9d9" stroke-width="0.25">1400</text><line x1="1245.4" y1="509.0" x2="1250.9" y2="509.0" stroke="#cfcfcf" stroke-width="1.5"/><text x="1244.6000000000001" y="514.6" font-size="14.6" text-anchor="end" fill="#d9d9d9" textLength="30.80" lengthAdjust="spacingAndGlyphs" stroke="#d9d9d9" stroke-width="0.25">1600</text><line x1="1250.9" y1="819.8" x2="1250.9" y2="825.3" stroke="#cfcfcf" stroke-width="1.4"/><text x="1250.5" y="841.0" font-size="14.6" text-anchor="middle" fill="#d9d9d9" textLength="7.70" lengthAdjust="spacingAndGlyphs" stroke="#d9d9d9" stroke-width="0.25">0</text><line x1="1316.8" y1="819.8" x2="1316.8" y2="825.3" stroke="#cfcfcf" stroke-width="1.4"/><text x="1316.4" y="841.0" font-size="14.6" text-anchor="middle" fill="#d9d9d9" textLength="15.40" lengthAdjust="spacingAndGlyphs" stroke="#d9d9d9" stroke-width="0.25">20</text><line x1="1382.7" y1="819.8" x2="1382.7" y2="825.3" stroke="#cfcfcf" stroke-width="1.4"/><text x="1382.3" y="841.0" font-size="14.6" text-anchor="middle" fill="#d9d9d9" textLength="15.40" lengthAdjust="spacingAndGlyphs" stroke="#d9d9d9" stroke-width="0.25">40</text><line x1="1448.7" y1="819.8" x2="1448.7" y2="825.3" stroke="#cfcfcf" stroke-width="1.4"/><text x="1448.3" y="841.0" font-size="14.6" text-anchor="middle" fill="#d9d9d9" textLength="15.40" lengthAdjust="spacingAndGlyphs" stroke="#d9d9d9" stroke-width="0.25">60</text><line x1="1514.6" y1="819.8" x2="1514.6" y2="825.3" stroke="#cfcfcf" stroke-width="1.4"/><text x="1514.2" y="841.0" font-size="14.6" text-anchor="middle" fill="#d9d9d9" textLength="15.40" lengthAdjust="spacingAndGlyphs" stroke="#d9d9d9" stroke-width="0.25">80</text><line x1="1580.5" y1="819.8" x2="1580.5" y2="825.3" stroke="#cfcfcf" stroke-width="1.4"/><text x="1580.1" y="841.0" font-size="14.6" text-anchor="middle" fill="#d9d9d9" textLength="23.10" lengthAdjust="spacingAndGlyphs" stroke="#d9d9d9" stroke-width="0.25">100</text><text x="1397" y="483.6" font-size="13.6" text-anchor="middle" fill="#dedede" textLength="67.6" lengthAdjust="spacingAndGlyphs" >Luminance</text></g>
<g id="rgbbars" class="sh"><rect x="949.4" y="652.3" width="240.0000000000001" height="172.4000000000001" fill="#232323"/><line x1="949.4" y1="669.54" x2="1189.4" y2="669.54" stroke="#888888" stroke-width="1.5"/><line x1="949.4" y1="704.02" x2="1189.4" y2="704.02" stroke="#888888" stroke-width="1.5"/><line x1="949.4" y1="738.5" x2="1189.4" y2="738.5" stroke="#888888" stroke-width="1.5"/><line x1="949.4" y1="772.98" x2="1189.4" y2="772.98" stroke="#888888" stroke-width="1.5"/><line x1="949.4" y1="807.46" x2="1189.4" y2="807.46" stroke="#888888" stroke-width="1.5"/><rect x="972.8" y="718.6" width="62.8" height="106.1" fill="url(#gR)" stroke="#0a0a0a" stroke-width="1"/><rect x="1036.4" y="752" width="63.0" height="72.7" fill="url(#gG)" stroke="#0a0a0a" stroke-width="1"/><rect x="1100.8" y="696.6" width="62.8" height="128.1" fill="url(#gB)" stroke="#0a0a0a" stroke-width="1"/><rect x="949.4" y="652.3" width="240.0000000000001" height="172.4000000000001" fill="none" stroke="#929292" stroke-width="1.6"/><line x1="943.4" y1="669.5" x2="949.4" y2="669.5" stroke="#cfcfcf" stroke-width="1.6"/><text x="942.9" y="675.1" font-size="14.6" text-anchor="end" fill="#d9d9d9" textLength="23.10" lengthAdjust="spacingAndGlyphs" stroke="#d9d9d9" stroke-width="0.25">104</text><line x1="943.4" y1="704.0" x2="949.4" y2="704.0" stroke="#cfcfcf" stroke-width="1.6"/><text x="942.9" y="709.6" font-size="14.6" text-anchor="end" fill="#d9d9d9" textLength="23.10" lengthAdjust="spacingAndGlyphs" stroke="#d9d9d9" stroke-width="0.25">102</text><line x1="943.4" y1="738.5" x2="949.4" y2="738.5" stroke="#cfcfcf" stroke-width="1.6"/><text x="942.9" y="744.1" font-size="14.6" text-anchor="end" fill="#d9d9d9" textLength="23.10" lengthAdjust="spacingAndGlyphs" stroke="#d9d9d9" stroke-width="0.25">100</text><line x1="943.4" y1="773.0" x2="949.4" y2="773.0" stroke="#cfcfcf" stroke-width="1.6"/><text x="942.9" y="778.6" font-size="14.6" text-anchor="end" fill="#d9d9d9" textLength="15.40" lengthAdjust="spacingAndGlyphs" stroke="#d9d9d9" stroke-width="0.25">98</text><line x1="943.4" y1="807.5" x2="949.4" y2="807.5" stroke="#cfcfcf" stroke-width="1.6"/><text x="942.9" y="813.1" font-size="14.6" text-anchor="end" fill="#d9d9d9" textLength="15.40" lengthAdjust="spacingAndGlyphs" stroke="#d9d9d9" stroke-width="0.25">96</text><line x1="949.4" y1="824.7" x2="949.4" y2="830.7" stroke="#cfcfcf" stroke-width="1.6"/><line x1="1189.4" y1="824.7" x2="1189.4" y2="830.7" stroke="#cfcfcf" stroke-width="1.6"/><text x="1069" y="840.4" font-size="14.6" text-anchor="middle" fill="#d9d9d9" textLength="23.10" lengthAdjust="spacingAndGlyphs" stroke="#d9d9d9" stroke-width="0.25">100</text></g>
<g id="reading" class="sh">
<text x="13.5" y="674" font-size="19" text-anchor="start" fill="#efefef" textLength="146.5" lengthAdjust="spacingAndGlyphs" >Current Reading:</text>
<text x="13.5" y="712.4" font-size="24" text-anchor="start" fill="#f2f2f2" textLength="99" lengthAdjust="spacingAndGlyphs" >x: 0.3121</text>
<text x="13.5" y="751.2" font-size="24" text-anchor="start" fill="#f2f2f2" textLength="99.5" lengthAdjust="spacingAndGlyphs" >y: 0.3188</text>
<text x="13.5" y="790.4" font-size="24" text-anchor="start" fill="#f2f2f2" textLength="120.5" lengthAdjust="spacingAndGlyphs" >fL: 492.336</text>
<text x="13.5" y="829.4" font-size="24" text-anchor="start" fill="#f2f2f2" textLength="166.5" lengthAdjust="spacingAndGlyphs" >cd/m²: 1686.87</text>
</g>
<rect x="238" y="819" width="13" height="13" rx="1.5" fill="#8c8c8c"/><path d="M247 821 L241.6 825.5 L247 830Z" fill="#2c2c2c"/>
<rect x="891.5" y="819" width="13" height="13" rx="1.5" fill="#8c8c8c"/><path d="M895.5 821 L900.9 825.5 L895.5 830Z" fill="#2c2c2c"/>
<g id="ctrl">
<defs><linearGradient id="gBtn" x1="0" y1="0" x2="0" y2="1"><stop offset="0" stop-color="#8e8e8e"/><stop offset="0.5" stop-color="#747474"/><stop offset="1" stop-color="#5c5c5c"/></linearGradient><linearGradient id="gBtn2" x1="0" y1="0" x2="0" y2="1"><stop offset="0" stop-color="#909090"/><stop offset="1" stop-color="#6a6a6a"/></linearGradient><linearGradient id="gDk" x1="0" y1="0" x2="0" y2="1"><stop offset="0" stop-color="#444"/><stop offset="1" stop-color="#2c2c2c"/></linearGradient></defs>
<rect x="1398.5" y="861.3" width="29" height="39" rx="2" fill="url(#gBtn)"/><rect x="1398.5" y="873" width="29" height="1" fill="#4e4e4e"/><rect x="1398.5" y="874" width="29" height="1" fill="#8c8c8c"/>
<ellipse cx="1413" cy="866.8" rx="4.6" ry="3.4" fill="#8e8e8e"/><path d="M1410.4 868.2 L1413 865.2 L1415.6 868.2Z" fill="#262626"/>
<rect x="1403.4" y="877.2" width="18.6" height="18" rx="2" fill="#141414" stroke="#4a4a4a" stroke-width="1"/><rect x="1404.4" y="878.2" width="16.6" height="7.6" fill="#2e2e2e"/>
<rect x="1429.0" y="861" width="27.6" height="18.6" fill="url(#gBtn)"/><rect x="1429.0" y="861" width="27.6" height="1" fill="#9a9a9a"/>
<circle cx="1443.0" cy="870.5" r="6" fill="#868686"/>
<rect x="1457.3" y="861" width="27.6" height="18.6" fill="url(#gBtn)"/><rect x="1457.3" y="861" width="27.6" height="1" fill="#9a9a9a"/>
<circle cx="1471.3" cy="870.5" r="6" fill="#868686"/>
<rect x="1485.6" y="861" width="27.6" height="18.6" fill="url(#gBtn)"/><rect x="1485.6" y="861" width="27.6" height="1" fill="#9a9a9a"/>
<circle cx="1499.6" cy="870.5" r="6" fill="#868686"/>
<rect x="1513.9" y="861" width="27.6" height="18.6" fill="url(#gBtn)"/><rect x="1513.9" y="861" width="27.6" height="1" fill="#9a9a9a"/>
<circle cx="1527.9" cy="870.5" r="6" fill="#868686"/>
<rect x="1440.6" y="868.2" width="4.8" height="4.8" fill="#2c2c2c"/>
<path d="M1469.6 867.4 L1474.6 870.6 L1469.6 873.8Z" fill="#2c2c2c"/>
<path d="M1497.8 867.6 H1496.2 V873.6 H1497.8 M1501.8 867.6 H1503.4 V873.6 H1501.8 M1498 870.6 H1501.6" stroke="#2c2c2c" stroke-width="1" fill="none"/>
<path d="M1524.6 870.6 c0-2 3-2 3.6 0 c0.6 2 3.6 2 3.6 0 c0-2 -3-2 -3.6 0 c-0.6 2 -3.6 2 -3.6 0Z" stroke="#3a3a3a" stroke-width="0.9" fill="none"/>
<rect x="1542.4" y="861" width="55.6" height="18.6" fill="url(#gDk)"/><circle cx="1556" cy="870.5" r="6" fill="#3c3c3c"/><circle cx="1585" cy="870.5" r="6" fill="#3c3c3c"/>
<path d="M1553 869.5 a3.2 3.2 0 0 1 6 0 M1559 871.5 a3.2 3.2 0 0 1 -6 0" stroke="#1c1c1c" stroke-width="1.1" fill="none"/>
<rect x="1429" y="880.4" width="84" height="19.6" fill="url(#gBtn2)"/><rect x="1514" y="880.4" width="84" height="19.6" fill="url(#gBtn2)"/>
<rect x="1429" y="880.4" width="169" height="1" fill="#a0a0a0"/><rect x="1513.2" y="881" width="1" height="19" fill="#5a5a5a"/>
<circle cx="1448" cy="889.8" r="5.6" fill="#9a9a9a"/><circle cx="1581" cy="889.8" r="5.6" fill="#9a9a9a"/>
<path d="M1447.6 887.6 L1445.4 889.8 L1447.6 892 M1450.6 887.6 L1448.4 889.8 L1450.6 892" stroke="#444" stroke-width="0.9" fill="none"/>
<path d="M1578.6 887.6 L1580.8 889.8 L1578.6 892 M1581.6 887.6 L1583.8 889.8 L1581.6 892" stroke="#444" stroke-width="0.9" fill="none"/>
<text x="1465" y="894.6" font-size="13.4" text-anchor="start" fill="#3e3e3e" font-weight="700" textLength="31" lengthAdjust="spacingAndGlyphs" >Back</text>
<text x="1531.4" y="894.6" font-size="13.4" text-anchor="start" fill="#3e3e3e" font-weight="700" textLength="32.2" lengthAdjust="spacingAndGlyphs" >Next</text>
</g>
</svg></body></html>
